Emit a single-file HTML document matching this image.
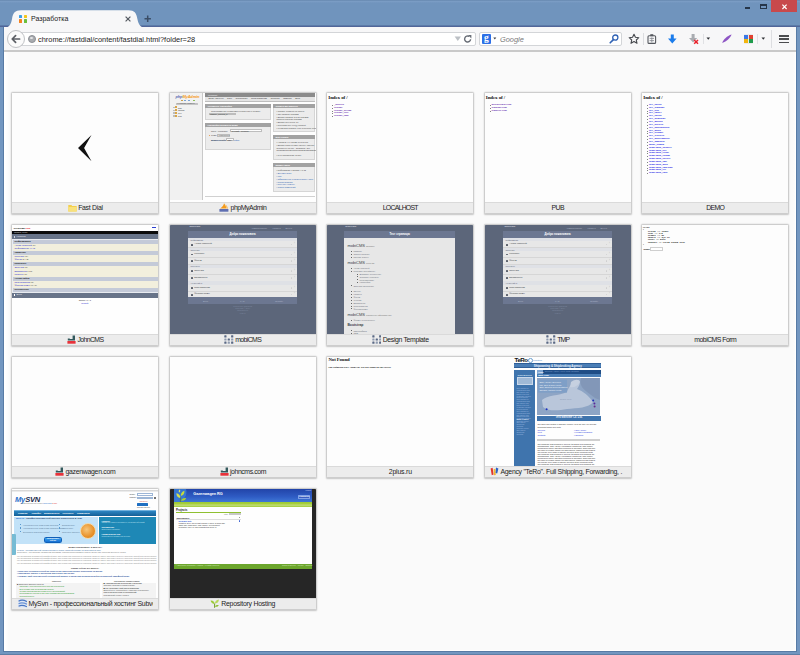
<!DOCTYPE html>
<html lang="ru">
<head>
<meta charset="utf-8">
<title>Разработка</title>
<style>
*{box-sizing:border-box;margin:0;padding:0}
html,body{width:800px;height:655px;overflow:hidden}
body{position:relative;background:#7195be;font-family:"Liberation Sans","DejaVu Sans",sans-serif;color:#222}
.abs{position:absolute}
/* window frame */
#frame{left:0;top:0;width:800px;height:655px;background:#7296c0}
#titlebar{left:0;top:0;width:800px;height:27px;background:linear-gradient(#6587ae 0,#7a9cc4 1.5px,#7094bd 3px,#7094bd 24.5px,#5a78a6 25.6px,#4e6397 26.4px,#5b73a3 27px)}
#tab{left:4px;top:10px;width:146px;height:18px}
#tabtxt{left:31px;top:14.5px;font-size:7px;color:#1a1a1a;letter-spacing:0;white-space:nowrap}
#navbar{left:4px;top:27px;width:792px;height:24px;background:#f7f7f8}
#navline{left:4px;top:50px;width:792px;height:2px;background:#c9c9c9}
#content{left:4px;top:52px;width:792px;height:599px;background:linear-gradient(to right,#fff 0,#fafafa 4px,#fafafa 788px,#fff 792px);border-left:1px solid #fff;border-right:1px solid #fff;border-bottom:1px solid #fff}
#edgeR{left:796px;top:27px;width:1px;height:625px;background:#587ba5}
#edgeL{left:3px;top:27px;width:1px;height:625px;background:#587ba5}
#edgeB{left:3px;top:651px;width:794px;height:1px;background:#587ba5}
#edgeBB{left:0;top:654px;width:800px;height:1px;background:#5f7fa6}
/* url bar */
.field{background:#fff;border:1px solid #d3d5d8;border-radius:2px;height:14.6px;top:31.6px}
#url{left:20px;width:456px}
#search{left:479px;width:143px}
.ftxt{font-size:7.4px;top:35px;white-space:nowrap;color:#1c1c1c}
/* tiles */
.tile{width:148.4px;height:122px;background:#fdfdfd;border:1px solid #cdcdcd;border-radius:1.5px;box-shadow:0 .6px 1.6px rgba(0,0,0,.22);overflow:hidden}
.tile .th{position:absolute;left:0;top:0;width:146.4px;height:109.1px;overflow:hidden}
.tile .cap{position:absolute;left:0;top:109.1px;width:146.4px;height:10.9px;background:#ececec;border-top:1px solid #dadada;overflow:hidden}
.cw{font-size:6.9px;line-height:10px;text-align:center;white-space:nowrap;color:#1d1d1d;letter-spacing:-.28px;margin:0 5.5px;overflow:hidden}
.ic{display:inline-block;vertical-align:-1.6px;margin-right:1.4px}
.b{position:absolute}
.t{position:absolute;white-space:nowrap}
</style>
</head>
<body>
<div id="frame" class="abs"></div>
<div id="titlebar" class="abs"></div>
<div id="navbar" class="abs"></div>
<div id="navline" class="abs"></div>
<div id="content" class="abs"></div>
<div id="edgeL" class="abs"></div>
<div id="edgeR" class="abs"></div>
<div id="edgeB" class="abs"></div>
<div id="edgeBB" class="abs"></div>

<!-- TAB -->
<svg id="tab" class="abs" viewBox="0 0 146 18" width="146" height="18">
  <path d="M0 18 C5 17.5 7 15 8 9 C9 3 11 0.3 17 0.3 L124.5 0.3 C130.5 0.3 132.3 3 133.4 9 C134.5 15 136.6 17.5 141.6 18 Z" fill="#f7f7f8"/>
</svg>
<div id="tabtxt" class="abs">Разработка</div>


<!-- tab favicon -->
<div class="abs" style="left:19px;top:15px;width:3.4px;height:3.2px;background:#3aa0ea;border-radius:.6px"></div>
<div class="abs" style="left:23.6px;top:15px;width:3.4px;height:3.2px;background:#f4c619;border-radius:.6px"></div>
<div class="abs" style="left:19px;top:19.4px;width:3.4px;height:3.2px;background:#f5821f;border-radius:.6px"></div>
<div class="abs" style="left:23.6px;top:19.4px;width:3.4px;height:3.2px;background:#6bbf3b;border-radius:.6px"></div>
<!-- tab close / new tab -->
<svg class="abs" style="left:124px;top:15px" width="8" height="8" viewBox="0 0 8 8"><path d="M1.6 1.6 L6.4 6.4 M6.4 1.6 L1.6 6.4" stroke="#555a61" stroke-width="1.2" fill="none"/></svg>
<svg class="abs" style="left:143px;top:14px" width="10" height="10" viewBox="0 0 10 10"><path d="M4.7 1.6 V8 M1.5 4.8 H7.9" stroke="#3a4d66" stroke-width="1.5" fill="none"/></svg>
<!-- window controls -->
<div class="abs" style="left:745px;top:7px;width:5px;height:2px;background:#26364a"></div>
<div class="abs" style="left:760px;top:4px;width:7px;height:5px;border:1px solid #26364a;border-top-width:2px"></div>
<div class="abs" style="left:771px;top:0;width:26px;height:12px;background:#c8494c"></div>
<svg class="abs" style="left:780px;top:3px" width="9" height="8" viewBox="0 0 9 8"><path d="M2.4 1.6 L6.6 6 M6.6 1.6 L2.4 6" stroke="#fff" stroke-width="1.15" fill="none"/></svg>

<!-- url field -->
<div id="url" class="abs field"></div>
<!-- back button -->
<div class="abs" style="left:7px;top:30px;width:18px;height:18px;border-radius:50%;background:#fbfbfb;border:1px solid #bfc1c4"></div>
<svg class="abs" style="left:10px;top:34px" width="12" height="10" viewBox="0 0 12 10"><path d="M9.6 5 H2.6 M5.6 1.6 L2.2 5 L5.6 8.4" stroke="#5c5f65" stroke-width="1.7" fill="none" stroke-linecap="round" stroke-linejoin="round"/></svg>
<!-- globe -->
<div class="abs" style="left:28px;top:35px;width:8px;height:8px;border-radius:50%;background:#a9acb0;border:1px solid #8d9095"></div>
<div class="abs" style="left:30px;top:36.5px;width:3px;height:2.6px;border-radius:50%;background:#e2e3e5"></div>
<div id="urltxt" class="abs ftxt" style="left:38px">chrome://fastdial/content/fastdial.html?folder=28</div>
<!-- dropdown + reload -->
<svg class="abs" style="left:454px;top:36px" width="8" height="6" viewBox="0 0 8 6"><path d="M0.6 0.6 H7 L3.8 5 Z" fill="#bcc0c5"/></svg>
<svg class="abs" style="left:463px;top:34px" width="10" height="10" viewBox="0 0 10 10"><path d="M7.6 5.2 A3 3 0 1 1 6.2 2.5" stroke="#6a6f78" stroke-width="1.4" fill="none"/><path d="M5 1 H8.4 V4.4 Z" fill="#6a6f78"/></svg>
<!-- search field -->
<div id="search" class="abs field"></div>
<div class="abs" style="left:481.5px;top:34px;width:9.5px;height:10px;background:#2c6fe6;border-radius:1px;color:#fff;font-family:'Liberation Serif',serif;font-weight:bold;font-size:9.5px;line-height:9px;text-align:center">g</div>
<svg class="abs" style="left:492.8px;top:37.3px" width="4" height="3" viewBox="0 0 4 3"><path d="M0.3 0.4 H3.3 L1.8 2.4 Z" fill="#3c4048"/></svg>
<div class="abs ftxt" style="left:500px;color:#7a7a7a;font-style:italic">Google</div>
<svg class="abs" style="left:608px;top:33px" width="12" height="12" viewBox="0 0 12 12"><circle cx="7.3" cy="4.6" r="2.6" stroke="#2f62b5" stroke-width="1.3" fill="none"/><path d="M5.4 6.6 L2.2 9.8" stroke="#2f62b5" stroke-width="1.6" stroke-linecap="round"/></svg>
<!-- star -->
<svg class="abs" style="left:628px;top:33px" width="12" height="12" viewBox="0 0 12 12"><path d="M6 1.2 L7.45 4.3 L10.8 4.7 L8.3 7 L9 10.3 L6 8.6 L3 10.3 L3.7 7 L1.2 4.7 L4.55 4.3 Z" stroke="#45484d" stroke-width="1.1" fill="none" stroke-linejoin="round"/></svg>
<div class="abs" style="left:642.5px;top:33px;width:1px;height:12px;background:#dcdde0"></div>
<!-- clipboard -->
<svg class="abs" style="left:646px;top:33px" width="12" height="12" viewBox="0 0 12 12"><rect x="2" y="2.8" width="7.6" height="7.6" rx="1" stroke="#55585e" stroke-width="1.1" fill="none"/><rect x="4.3" y="1.2" width="3" height="2" fill="#55585e"/><path d="M3.6 5.4 H8 M3.6 7.6 H8 M5.8 4.4 V9.4" stroke="#80838a" stroke-width=".8"/></svg>
<!-- blue down arrow -->
<svg class="abs" style="left:667px;top:33px" width="11" height="12" viewBox="0 0 11 12"><path d="M3.8 1.4 H6.8 V5.6 H9.6 L5.3 10.4 L1 5.6 H3.8 Z" fill="#1b7ceb"/></svg>
<!-- gray arrow with red x -->
<svg class="abs" style="left:688px;top:33px" width="12" height="12" viewBox="0 0 12 12"><path d="M3.6 1 H6.6 V5 H9.2 L5.1 9.6 L1 5 H3.6 Z" fill="#a9acb1"/><path d="M6.2 7 L10 10.8 M10 7 L6.2 10.8" stroke="#e8212b" stroke-width="1.5"/></svg>
<div class="abs" style="left:702.5px;top:34px;width:1px;height:10px;background:#e0e1e4"></div>
<svg class="abs" style="left:706.3px;top:37.3px" width="5" height="4" viewBox="0 0 5 4"><path d="M0.5 0.5 H4.1 L2.3 2.7 Z" fill="#2d2f33"/></svg>
<!-- purple feather -->
<svg class="abs" style="left:721px;top:33px" width="12" height="12" viewBox="0 0 12 12"><path d="M1.2 10 C2.5 6.5 6 3 10.6 1.6 C9.4 5.2 5.6 8.4 1.2 10 Z" fill="#8d55c4"/></svg>
<!-- colorful icon -->
<div class="abs" style="left:743.5px;top:34px;width:9.5px;height:9.5px;background:#e9e9e9;border-radius:1px"></div>
<div class="abs" style="left:744px;top:34.5px;width:4px;height:4px;background:#3b78e7"></div>
<div class="abs" style="left:748.5px;top:34.5px;width:4px;height:4px;background:#e0412f"></div>
<div class="abs" style="left:744px;top:39px;width:4px;height:4px;background:#f2b50f"></div>
<div class="abs" style="left:748.5px;top:39px;width:4px;height:4px;background:#1f9c4d"></div>
<div class="abs" style="left:756.5px;top:34px;width:1px;height:10px;background:#e0e1e4"></div>
<svg class="abs" style="left:760.8px;top:37.3px" width="5" height="4" viewBox="0 0 5 4"><path d="M0.5 0.5 H4.1 L2.3 2.7 Z" fill="#2d2f33"/></svg>
<div class="abs" style="left:771px;top:30px;width:1px;height:18px;background:#dddee1"></div>
<!-- hamburger -->
<div class="abs" style="left:779px;top:35px;width:10px;height:1.5px;background:#4b4c4f"></div>
<div class="abs" style="left:779px;top:38.3px;width:10px;height:1.5px;background:#4b4c4f"></div>
<div class="abs" style="left:779px;top:41.6px;width:10px;height:1.5px;background:#4b4c4f"></div>

<!-- TILES -->
<div id="tiles">
<div class="tile abs" style="left:11.10px;top:92.00px"><div class="th" style="background:#fdfdfd"><svg class="b" style="left:65.20px;top:40.70px" width="16" height="29" viewBox="0 0 16 29"><path d="M1 14 L14.5 1 L7.1 14 L14.5 27.3 Z" fill="#111"/></svg></div><div class="cap"><div class="cw" style=""><svg class="ic" width="9" height="8" viewBox="0 0 9 8"><path d="M0.3 1 H3.4 L4.2 2 H8.7 V7.6 H0.3 Z" fill="#f3cf4c"/><path d="M0.3 3 H8.7 V7.6 H0.3 Z" fill="#f8e17c"/></svg>Fast Dial</div></div></div>
<div class="tile abs" style="left:168.60px;top:92.00px"><div class="th" style="background:#fefefe"><div class="b" style="left:0.00px;top:0.00px;width:33.50px;height:107.00px;background:#f1f1f1;border-right:1px solid #c9c9c9"></div><div class="t" style="left:5.90px;top:1.60px;font-size:4px;line-height:4px;color:#222;font-weight:bold;font-style:italic;letter-spacing:-.15px"><span style="color:#5f6fb2">php</span><span style="color:#f59b1c">MyAdmin</span></div><div class="b" style="left:11.40px;top:6.60px;width:2.00px;height:1.80px;background:#c9a24a;"></div><div class="b" style="left:14.90px;top:6.60px;width:2.00px;height:1.80px;background:#7aa3d6;"></div><div class="b" style="left:18.40px;top:6.60px;width:2.00px;height:1.80px;background:#7aa3d6;"></div><div class="b" style="left:23.40px;top:6.60px;width:2.00px;height:1.80px;background:#8ec05a;"></div><div class="b" style="left:6.40px;top:9.60px;width:22.00px;height:2.60px;background:#fdfdfd;border:.5px solid #c6c6c6"></div><div class="t" style="left:7.40px;top:10.00px;font-size:1.9px;line-height:1.9px;color:#555;">(Недавние таблицы) ...</div><div class="b" style="left:3.40px;top:13.60px;width:1.60px;height:1.60px;background:#bdbdbd;"></div><div class="b" style="left:5.70px;top:13.40px;width:2.00px;height:2.00px;background:#d9a548;"></div><div class="t" style="left:8.40px;top:13.50px;font-size:2.2px;line-height:2.2px;color:#333;">bas</div><div class="b" style="left:3.40px;top:16.50px;width:1.60px;height:1.60px;background:#bdbdbd;"></div><div class="b" style="left:5.70px;top:16.30px;width:2.00px;height:2.00px;background:#d9a548;"></div><div class="t" style="left:8.40px;top:16.40px;font-size:2.2px;line-height:2.2px;color:#333;">dbcms</div><div class="b" style="left:3.40px;top:19.40px;width:1.60px;height:1.60px;background:#bdbdbd;"></div><div class="b" style="left:5.70px;top:19.20px;width:2.00px;height:2.00px;background:#d9a548;"></div><div class="t" style="left:8.40px;top:19.30px;font-size:2.2px;line-height:2.2px;color:#333;">dev</div><div class="b" style="left:3.40px;top:22.30px;width:1.60px;height:1.60px;background:#bdbdbd;"></div><div class="b" style="left:5.70px;top:22.10px;width:2.00px;height:2.00px;background:#d9a548;"></div><div class="t" style="left:8.40px;top:22.20px;font-size:2.2px;line-height:2.2px;color:#333;">pub</div><div class="b" style="left:35.90px;top:0.40px;width:109.70px;height:3.70px;background:#8b8b8b;"></div><div class="t" style="left:38.40px;top:1.30px;font-size:2.3px;line-height:2.3px;color:#f2f2f2;">localhost</div><div class="b" style="left:35.90px;top:4.10px;width:109.70px;height:4.60px;background:#e4e4e4;border-bottom:.5px solid #bdbdbd"></div><div class="t" style="left:38.90px;top:5.40px;font-size:2.45px;line-height:2.45px;color:#3a3a3a;white-space:pre;word-spacing:.2px">Базы данных    SQL    Состояние    Пользователи    Экспорт    Импорт    Ещё</div><div class="b" style="left:35.90px;top:11.00px;width:65.50px;height:3.80px;background:#a2a2a2;"></div><div class="t" style="left:37.90px;top:11.80px;font-size:2.3px;line-height:2.3px;color:#fff;font-weight:bold">Основные настройки</div><div class="b" style="left:35.90px;top:14.80px;width:65.50px;height:12.30px;background:#ececec;border:.5px solid #d5d5d5;border-top:0"></div><div class="t" style="left:41.40px;top:17.40px;font-size:2.2px;line-height:2.2px;color:#444;">Сопоставление кодировки соединения с MySQL:</div><div class="b" style="left:39.40px;top:19.60px;width:27.00px;height:2.80px;background:#fdfdfd;border:.5px solid #bdbdbd"></div><div class="t" style="left:40.40px;top:20.00px;font-size:2px;line-height:2px;color:#333;">utf8mb4_general_ci</div><div class="b" style="left:35.90px;top:29.80px;width:65.50px;height:3.80px;background:#a2a2a2;"></div><div class="t" style="left:37.90px;top:30.60px;font-size:2.3px;line-height:2.3px;color:#fff;font-weight:bold">Настройки внешнего вида</div><div class="b" style="left:35.90px;top:33.60px;width:65.50px;height:23.00px;background:#ececec;border:.5px solid #d5d5d5;border-top:0"></div><div class="t" style="left:41.40px;top:45.60px;font-size:2.2px;line-height:2.2px;color:#2a5db0;">Дополнительные настройки</div><div class="t" style="left:41.40px;top:37.00px;font-size:2.2px;line-height:2.2px;color:#444;">Язык - Language</div><div class="b" style="left:60.40px;top:36.20px;width:32.00px;height:3.00px;background:#fdfdfd;border:.5px solid #bdbdbd"></div><div class="t" style="left:61.90px;top:36.80px;font-size:2.1px;line-height:2.1px;color:#333;">Русский - Russian</div><div class="b" style="left:39.00px;top:41.60px;width:1.80px;height:1.80px;background:#e88a2a;border-radius:50%"></div><div class="t" style="left:41.40px;top:41.40px;font-size:2.2px;line-height:2.2px;color:#444;">Тема:</div><div class="b" style="left:47.90px;top:40.80px;width:13.00px;height:3.00px;background:#fdfdfd;border:.5px solid #bdbdbd"></div><div class="t" style="left:48.90px;top:41.40px;font-size:2.1px;line-height:2.1px;color:#333;">pmahomme</div><div class="t" style="left:41.40px;top:45.80px;font-size:2.2px;line-height:2.2px;color:#444;">Размер шрифта:</div><div class="b" style="left:56.90px;top:45.20px;width:8.00px;height:3.00px;background:#fdfdfd;border:.5px solid #bdbdbd"></div><div class="t" style="left:57.90px;top:45.80px;font-size:2.1px;line-height:2.1px;color:#333;">82%</div><div class="b" style="left:103.80px;top:11.00px;width:41.80px;height:3.80px;background:#a2a2a2;"></div><div class="t" style="left:105.80px;top:11.80px;font-size:2.3px;line-height:2.3px;color:#fff;font-weight:bold">Сервер баз данных</div><div class="b" style="left:103.80px;top:14.80px;width:41.80px;height:24.40px;background:#ececec;border:.5px solid #d5d5d5;border-top:0"></div><div class="t" style="left:106.80px;top:17.40px;font-size:2.05px;line-height:2.05px;color:#444;">• Сервер: localhost via TCP/IP</div><div class="t" style="left:106.80px;top:20.10px;font-size:2.05px;line-height:2.05px;color:#444;">• Тип сервера: MariaDB</div><div class="t" style="left:106.80px;top:22.80px;font-size:2.05px;line-height:2.05px;color:#444;">• Версия сервера: 5.5.37-MariaDB</div><div class="t" style="left:106.80px;top:25.20px;font-size:2.05px;line-height:2.05px;color:#444;">   распространение MariaDB</div><div class="t" style="left:106.80px;top:28.00px;font-size:2.05px;line-height:2.05px;color:#444;">• Версия протокола: 10</div><div class="t" style="left:106.80px;top:30.80px;font-size:2.05px;line-height:2.05px;color:#444;">• Пользователь: root@localhost</div><div class="t" style="left:106.80px;top:33.60px;font-size:2.05px;line-height:2.05px;color:#444;">• Кодировка сервера: UTF-8 Unicode (utf8)</div><div class="b" style="left:103.80px;top:42.00px;width:41.80px;height:3.80px;background:#a2a2a2;"></div><div class="t" style="left:105.80px;top:42.80px;font-size:2.3px;line-height:2.3px;color:#fff;font-weight:bold">Веб-сервер</div><div class="b" style="left:103.80px;top:45.80px;width:41.80px;height:21.00px;background:#ececec;border:.5px solid #d5d5d5;border-top:0"></div><div class="t" style="left:106.80px;top:48.40px;font-size:2.05px;line-height:2.05px;color:#444;">• Apache/2.4.9 (Win32) PHP/5.5.11</div><div class="t" style="left:106.80px;top:51.20px;font-size:2.05px;line-height:2.05px;color:#444;">• Версия клиента базы данных: libmysql</div><div class="t" style="left:106.80px;top:53.80px;font-size:2.05px;line-height:2.05px;color:#444;">   mysqlnd 5.0.11-dev - 20120503 - $Id:</div><div class="t" style="left:106.80px;top:56.40px;font-size:2.05px;line-height:2.05px;color:#444;">   bf9ad53b11c9a57efdb1057292d73b928b8c5c77</div><div class="t" style="left:106.80px;top:61.40px;font-size:2.05px;line-height:2.05px;color:#444;">• PHP расширение: mysqli</div><div class="b" style="left:103.80px;top:69.80px;width:41.80px;height:3.80px;background:#a2a2a2;"></div><div class="t" style="left:105.80px;top:70.60px;font-size:2.3px;line-height:2.3px;color:#fff;font-weight:bold">phpMyAdmin</div><div class="b" style="left:103.80px;top:73.60px;width:41.80px;height:25.60px;background:#ececec;border:.5px solid #d5d5d5;border-top:0"></div><div class="t" style="left:106.80px;top:76.40px;font-size:2.05px;line-height:2.05px;color:#444;">• Информация о версии: 4.1.12</div><div class="t" style="left:106.80px;top:79.20px;font-size:2.05px;line-height:2.05px;color:#2a5db0;">• Документация</div><div class="t" style="left:106.80px;top:82.00px;font-size:2.05px;line-height:2.05px;color:#2a5db0;">• Wiki</div><div class="t" style="left:106.80px;top:84.80px;font-size:2.05px;line-height:2.05px;color:#2a5db0;">• Официальная страница phpMyAdmin</div><div class="t" style="left:106.80px;top:87.60px;font-size:2.05px;line-height:2.05px;color:#2a5db0;">• Пожертвование</div><div class="t" style="left:106.80px;top:90.40px;font-size:2.05px;line-height:2.05px;color:#2a5db0;">• Получить помощь</div><div class="t" style="left:106.80px;top:93.20px;font-size:2.05px;line-height:2.05px;color:#2a5db0;">• Список изменений</div><div class="b" style="left:35.90px;top:103.20px;width:109.70px;height:0.60px;background:#d0d0d0;"></div></div><div class="cap"><div class="cw" style="letter-spacing:-0.42px;"><svg class="ic" width="10" height="9" viewBox="0 0 10 9"><path d="M1 5.4 C3 4.6 4.6 2.6 5 0.3 C6.4 2 7.4 4 7.6 5.6 Z" fill="#f59b1c"/><path d="M6.6 1.6 C8 3 8.8 4.4 9 5.8 L7.8 5.6 Z" fill="#f7b853"/><rect x="0.4" y="6" width="9" height="2.7" fill="#5f6fb2"/></svg>phpMyAdmin</div></div></div>
<div class="tile abs" style="left:326.10px;top:92.00px"><div class="th" style="background:#fdfdfd"><div class="t" style="left:1.20px;top:2.20px;font-size:5px;line-height:5px;color:#111;font-family:'Liberation Serif',serif;font-weight:bold;letter-spacing:-.1px">Index of /</div><div class="b" style="left:5.00px;top:11.90px;width:0.90px;height:0.90px;background:#333;border-radius:50%"></div><div class="t" style="left:6.80px;top:10.90px;font-size:2.75px;line-height:2.75px;color:#6a2fb0;font-family:'Liberation Serif',serif;font-weight:bold">_dbprop</div><div class="b" style="left:5.00px;top:14.75px;width:0.90px;height:0.90px;background:#333;border-radius:50%"></div><div class="t" style="left:6.80px;top:13.75px;font-size:2.75px;line-height:2.75px;color:#6a2fb0;font-family:'Liberation Serif',serif;font-weight:bold">selfcms</div><div class="b" style="left:5.00px;top:17.60px;width:0.90px;height:0.90px;background:#333;border-radius:50%"></div><div class="t" style="left:6.80px;top:16.60px;font-size:2.75px;line-height:2.75px;color:#6a2fb0;font-family:'Liberation Serif',serif;font-weight:bold">selfcms_design</div><div class="b" style="left:5.00px;top:20.45px;width:0.90px;height:0.90px;background:#333;border-radius:50%"></div><div class="t" style="left:6.80px;top:19.45px;font-size:2.75px;line-height:2.75px;color:#6a2fb0;font-family:'Liberation Serif',serif;font-weight:bold">selfcms_foto</div><div class="b" style="left:5.00px;top:23.30px;width:0.90px;height:0.90px;background:#333;border-radius:50%"></div><div class="t" style="left:6.80px;top:22.30px;font-size:2.75px;line-height:2.75px;color:#6a2fb0;font-family:'Liberation Serif',serif;font-weight:bold">selfcms_tmp</div></div><div class="cap"><div class="cw" style="letter-spacing:-0.75px;">LOCALHOST</div></div></div>
<div class="tile abs" style="left:483.60px;top:92.00px"><div class="th" style="background:#fdfdfd"><div class="t" style="left:1.20px;top:2.20px;font-size:5px;line-height:5px;color:#111;font-family:'Liberation Serif',serif;font-weight:bold;letter-spacing:-.1px">Index of /</div><div class="b" style="left:5.00px;top:11.90px;width:0.90px;height:0.90px;background:#333;border-radius:50%"></div><div class="t" style="left:6.80px;top:10.90px;font-size:2.75px;line-height:2.75px;color:#6a2fb0;font-family:'Liberation Serif',serif;font-weight:bold">gazenwagen.com</div><div class="b" style="left:5.00px;top:14.75px;width:0.90px;height:0.90px;background:#333;border-radius:50%"></div><div class="t" style="left:6.80px;top:13.75px;font-size:2.75px;line-height:2.75px;color:#6a2fb0;font-family:'Liberation Serif',serif;font-weight:bold">johncms.com</div><div class="b" style="left:5.00px;top:17.60px;width:0.90px;height:0.90px;background:#333;border-radius:50%"></div><div class="t" style="left:6.80px;top:16.60px;font-size:2.75px;line-height:2.75px;color:#6a2fb0;font-family:'Liberation Serif',serif;font-weight:bold">tempsite.com</div></div><div class="cap"><div class="cw" style="letter-spacing:-0.55px;">PUB</div></div></div>
<div class="tile abs" style="left:641.10px;top:92.00px"><div class="th" style="background:#fdfdfd"><div class="t" style="left:1.20px;top:2.20px;font-size:5px;line-height:5px;color:#111;font-family:'Liberation Serif',serif;font-weight:bold;letter-spacing:-.1px">Index of /</div><div class="b" style="left:5.00px;top:11.90px;width:0.90px;height:0.90px;background:#333;border-radius:50%"></div><div class="t" style="left:6.80px;top:10.90px;font-size:2.75px;line-height:2.75px;color:#2323e6;font-family:'Liberation Serif',serif;font-weight:bold">dev_install</div><div class="b" style="left:5.00px;top:14.75px;width:0.90px;height:0.90px;background:#333;border-radius:50%"></div><div class="t" style="left:6.80px;top:13.75px;font-size:2.75px;line-height:2.75px;color:#2323e6;font-family:'Liberation Serif',serif;font-weight:bold">dev_johncms</div><div class="b" style="left:5.00px;top:17.60px;width:0.90px;height:0.90px;background:#333;border-radius:50%"></div><div class="t" style="left:6.80px;top:16.60px;font-size:2.75px;line-height:2.75px;color:#2323e6;font-family:'Liberation Serif',serif;font-weight:bold">dev_foto</div><div class="b" style="left:5.00px;top:20.45px;width:0.90px;height:0.90px;background:#333;border-radius:50%"></div><div class="t" style="left:6.80px;top:19.45px;font-size:2.75px;line-height:2.75px;color:#2323e6;font-family:'Liberation Serif',serif;font-weight:bold">dev_shop4</div><div class="b" style="left:5.00px;top:23.30px;width:0.90px;height:0.90px;background:#333;border-radius:50%"></div><div class="t" style="left:6.80px;top:22.30px;font-size:2.75px;line-height:2.75px;color:#2323e6;font-family:'Liberation Serif',serif;font-weight:bold">dev_install</div><div class="b" style="left:5.00px;top:26.15px;width:0.90px;height:0.90px;background:#333;border-radius:50%"></div><div class="t" style="left:6.80px;top:25.15px;font-size:2.75px;line-height:2.75px;color:#2323e6;font-family:'Liberation Serif',serif;font-weight:bold">dev_dcmskins</div><div class="b" style="left:5.00px;top:29.00px;width:0.90px;height:0.90px;background:#333;border-radius:50%"></div><div class="t" style="left:6.80px;top:28.00px;font-size:2.75px;line-height:2.75px;color:#2323e6;font-family:'Liberation Serif',serif;font-weight:bold">dev_upload</div><div class="b" style="left:5.00px;top:31.85px;width:0.90px;height:0.90px;background:#333;border-radius:50%"></div><div class="t" style="left:6.80px;top:30.85px;font-size:2.75px;line-height:2.75px;color:#2323e6;font-family:'Liberation Serif',serif;font-weight:bold">dev_proweb</div><div class="b" style="left:5.00px;top:34.70px;width:0.90px;height:0.90px;background:#333;border-radius:50%"></div><div class="t" style="left:6.80px;top:33.70px;font-size:2.75px;line-height:2.75px;color:#2323e6;font-family:'Liberation Serif',serif;font-weight:bold">dev_photoupload</div><div class="b" style="left:5.00px;top:37.55px;width:0.90px;height:0.90px;background:#333;border-radius:50%"></div><div class="t" style="left:6.80px;top:36.55px;font-size:2.75px;line-height:2.75px;color:#2323e6;font-family:'Liberation Serif',serif;font-weight:bold">dev_mod4</div><div class="b" style="left:5.00px;top:40.40px;width:0.90px;height:0.90px;background:#333;border-radius:50%"></div><div class="t" style="left:6.80px;top:39.40px;font-size:2.75px;line-height:2.75px;color:#2323e6;font-family:'Liberation Serif',serif;font-weight:bold">dev_forum4</div><div class="b" style="left:5.00px;top:43.25px;width:0.90px;height:0.90px;background:#333;border-radius:50%"></div><div class="t" style="left:6.80px;top:42.25px;font-size:2.75px;line-height:2.75px;color:#2323e6;font-family:'Liberation Serif',serif;font-weight:bold">dev_wikiweb</div><div class="b" style="left:5.00px;top:46.10px;width:0.90px;height:0.90px;background:#333;border-radius:50%"></div><div class="t" style="left:6.80px;top:45.10px;font-size:2.75px;line-height:2.75px;color:#2323e6;font-family:'Liberation Serif',serif;font-weight:bold">dev_mailtemplate</div><div class="b" style="left:5.00px;top:48.95px;width:0.90px;height:0.90px;background:#333;border-radius:50%"></div><div class="t" style="left:6.80px;top:47.95px;font-size:2.75px;line-height:2.75px;color:#2323e6;font-family:'Liberation Serif',serif;font-weight:bold">dev_jumpbar</div><div class="b" style="left:5.00px;top:51.80px;width:0.90px;height:0.90px;background:#333;border-radius:50%"></div><div class="t" style="left:6.80px;top:50.80px;font-size:2.75px;line-height:2.75px;color:#2323e6;font-family:'Liberation Serif',serif;font-weight:bold">mods_admin</div><div class="b" style="left:5.00px;top:54.65px;width:0.90px;height:0.90px;background:#333;border-radius:50%"></div><div class="t" style="left:6.80px;top:53.65px;font-size:2.75px;line-height:2.75px;color:#2323e6;font-family:'Liberation Serif',serif;font-weight:bold">dcms-mod_adapter</div><div class="b" style="left:5.00px;top:57.50px;width:0.90px;height:0.90px;background:#333;border-radius:50%"></div><div class="t" style="left:6.80px;top:56.50px;font-size:2.75px;line-height:2.75px;color:#2323e6;font-family:'Liberation Serif',serif;font-weight:bold">dcms-mod_bot</div><div class="b" style="left:5.00px;top:60.35px;width:0.90px;height:0.90px;background:#333;border-radius:50%"></div><div class="t" style="left:6.80px;top:59.35px;font-size:2.75px;line-height:2.75px;color:#2323e6;font-family:'Liberation Serif',serif;font-weight:bold">dcms-mod_crons</div><div class="b" style="left:5.00px;top:63.20px;width:0.90px;height:0.90px;background:#333;border-radius:50%"></div><div class="t" style="left:6.80px;top:62.20px;font-size:2.75px;line-height:2.75px;color:#2323e6;font-family:'Liberation Serif',serif;font-weight:bold">dcms-mod_forum</div><div class="b" style="left:5.00px;top:66.05px;width:0.90px;height:0.90px;background:#333;border-radius:50%"></div><div class="t" style="left:6.80px;top:65.05px;font-size:2.75px;line-height:2.75px;color:#2323e6;font-family:'Liberation Serif',serif;font-weight:bold">dcms-mod_library</div><div class="b" style="left:5.00px;top:68.90px;width:0.90px;height:0.90px;background:#333;border-radius:50%"></div><div class="t" style="left:6.80px;top:67.90px;font-size:2.75px;line-height:2.75px;color:#2323e6;font-family:'Liberation Serif',serif;font-weight:bold">dcms-mod_sms</div><div class="b" style="left:5.00px;top:71.75px;width:0.90px;height:0.90px;background:#333;border-radius:50%"></div><div class="t" style="left:6.80px;top:70.75px;font-size:2.75px;line-height:2.75px;color:#2323e6;font-family:'Liberation Serif',serif;font-weight:bold">dcms-mod_map</div><div class="b" style="left:5.00px;top:74.60px;width:0.90px;height:0.90px;background:#333;border-radius:50%"></div><div class="t" style="left:6.80px;top:73.60px;font-size:2.75px;line-height:2.75px;color:#2323e6;font-family:'Liberation Serif',serif;font-weight:bold">dcms-mod_tmp.php</div><div class="b" style="left:5.00px;top:77.45px;width:0.90px;height:0.90px;background:#333;border-radius:50%"></div><div class="t" style="left:6.80px;top:76.45px;font-size:2.75px;line-height:2.75px;color:#2323e6;font-family:'Liberation Serif',serif;font-weight:bold">dcms-mod_csv</div><div class="b" style="left:5.00px;top:80.30px;width:0.90px;height:0.90px;background:#333;border-radius:50%"></div><div class="t" style="left:6.80px;top:79.30px;font-size:2.75px;line-height:2.75px;color:#2323e6;font-family:'Liberation Serif',serif;font-weight:bold">dcms-mod_chat</div></div><div class="cap"><div class="cw" style="letter-spacing:-0.68px;">DEMO</div></div></div>
<div class="tile abs" style="left:11.10px;top:224.10px"><div class="th" style="background:#fefefe"><div class="t" style="left:1.30px;top:1.50px;font-size:2.3px;line-height:2.3px;color:#222;font-weight:bold"><span style="color:#111">JOHNCMS</span><span style="color:#e0262c">.com</span></div><div class="b" style="left:139.70px;top:1.50px;width:1.80px;height:1.60px;background:#2c3fd0;"></div><div class="b" style="left:142.10px;top:1.50px;width:2.20px;height:1.60px;background:#2c3fd0;"></div><div class="b" style="left:0.00px;top:5.50px;width:146.40px;height:3.70px;background:#0b0b0b;"></div><div class="t" style="left:1.90px;top:6.20px;font-size:2.2px;line-height:2.2px;color:#ddd;">Привет, Гость</div><div class="b" style="left:0.00px;top:9.20px;width:146.40px;height:5.00px;background:#687489;"></div><div class="b" style="left:1.50px;top:10.70px;width:1.80px;height:1.80px;background:#cfd5e0;"></div><div class="t" style="left:4.30px;top:10.50px;font-size:2.4px;line-height:2.4px;color:#e8ebf1;">Новости</div><div class="b" style="left:0.00px;top:14.20px;width:146.40px;height:58.40px;background:#e9ecf1;"></div><div class="b" style="left:0.60px;top:15.10px;width:145.20px;height:3.70px;background:#c4cad8;"></div><div class="t" style="left:2.30px;top:15.70px;font-size:2.5px;line-height:2.5px;color:#1c1c1c;font-weight:bold">Информация</div><div class="b" style="left:0.60px;top:18.80px;width:145.20px;height:7.44px;background:#f2efdd;"></div><div class="t" style="left:2.30px;top:19.60px;font-size:2.4px;line-height:2.4px;color:#222;"><span style="color:#2a2ad0">Архив новостей</span> <span style="color:#333">(1)</span></div><div class="t" style="left:2.30px;top:23.30px;font-size:2.4px;line-height:2.4px;color:#222;"><span style="color:#2a2ad0">Информация, FAQ</span> <span style="color:#333"></span></div><div class="b" style="left:0.60px;top:26.20px;width:145.20px;height:3.70px;background:#c4cad8;"></div><div class="t" style="left:2.30px;top:26.80px;font-size:2.5px;line-height:2.5px;color:#1c1c1c;font-weight:bold">Общение</div><div class="b" style="left:0.60px;top:29.90px;width:145.20px;height:7.44px;background:#f2efdd;"></div><div class="t" style="left:2.30px;top:30.70px;font-size:2.4px;line-height:2.4px;color:#222;"><span style="color:#2a2ad0">Гостевая</span> <span style="color:#333">(0)</span></div><div class="t" style="left:2.30px;top:34.40px;font-size:2.4px;line-height:2.4px;color:#222;"><span style="color:#2a2ad0">Форум</span> <span style="color:#333">(1 / 3)</span></div><div class="b" style="left:0.60px;top:37.30px;width:145.20px;height:3.70px;background:#c4cad8;"></div><div class="t" style="left:2.30px;top:37.90px;font-size:2.5px;line-height:2.5px;color:#1c1c1c;font-weight:bold">Полезное</div><div class="b" style="left:0.60px;top:41.00px;width:145.20px;height:11.16px;background:#f2efdd;"></div><div class="t" style="left:2.30px;top:41.80px;font-size:2.4px;line-height:2.4px;color:#222;"><span style="color:#2a2ad0">Загрузки</span> <span style="color:#333">(0)</span></div><div class="t" style="left:2.30px;top:45.50px;font-size:2.4px;line-height:2.4px;color:#222;"><span style="color:#2a2ad0">Библиотека</span> <span style="color:#333">(48)</span></div><div class="t" style="left:2.30px;top:49.20px;font-size:2.4px;line-height:2.4px;color:#222;"><span style="color:#2a2ad0">Галерея</span> <span style="color:#333">(0)</span></div><div class="b" style="left:0.60px;top:52.10px;width:145.20px;height:3.70px;background:#c4cad8;"></div><div class="t" style="left:2.30px;top:52.70px;font-size:2.5px;line-height:2.5px;color:#1c1c1c;font-weight:bold">Актив сайта</div><div class="b" style="left:0.60px;top:55.80px;width:145.20px;height:7.44px;background:#f2efdd;"></div><div class="t" style="left:2.30px;top:56.60px;font-size:2.4px;line-height:2.4px;color:#222;"><span style="color:#2a2ad0">Пользователи</span> <span style="color:#333">(1)</span></div><div class="t" style="left:2.30px;top:60.30px;font-size:2.4px;line-height:2.4px;color:#222;"><span style="color:#2a2ad0">Фотоальбомы</span> <span style="color:#333">(0 / 0)</span></div><div class="b" style="left:0.60px;top:63.20px;width:145.20px;height:3.70px;background:#c4cad8;"></div><div class="t" style="left:2.30px;top:63.80px;font-size:2.5px;line-height:2.5px;color:#1c1c1c;font-weight:bold">Интересное</div><div class="b" style="left:0.00px;top:67.80px;width:146.40px;height:4.80px;background:#687489;"></div><div class="b" style="left:1.50px;top:69.30px;width:1.60px;height:1.60px;background:#fff;"></div><div class="t" style="left:4.30px;top:69.10px;font-size:2.4px;line-height:2.4px;color:#e8ebf1;">Вход</div><div class="t" style="left:0.00px;top:74.10px;font-size:2.3px;line-height:2.3px;color:#222;"><div style="width:145.5px;text-align:center;color:#222">Online: 0 / 1</div></div><div class="t" style="left:0.00px;top:77.30px;font-size:2.3px;line-height:2.3px;color:#222;"><div style="width:145.5px;text-align:center;color:#2a2ad0">Гостей</div></div></div><div class="cap"><div class="cw" style="letter-spacing:-0.61px;"><svg class="ic" width="9" height="9" viewBox="0 0 9 9"><path d="M5.6 0.4 H8 V5.4 H0.8 V3.4 H2.8 V4 H5.6 Z" fill="#33595d"/><rect x="0.4" y="6" width="8.2" height="2.7" fill="#e8323a"/></svg>JohnCMS</div></div></div>
<div class="tile abs" style="left:168.60px;top:224.10px"><div class="th" style="background:#5c667a"><div class="t" style="left:19.80px;top:1.30px;font-size:2.4px;line-height:2.4px;color:#c9cedb;font-weight:bold">mobiCMS</div><div class="t" style="left:81.30px;top:1.50px;font-size:2.2px;line-height:2.2px;color:#aeb6c7;">Администрация</div><div class="t" style="left:102.80px;top:1.50px;font-size:2.2px;line-height:2.2px;color:#aeb6c7;">Кабинет</div><div class="t" style="left:115.80px;top:1.50px;font-size:2.2px;line-height:2.2px;color:#aeb6c7;">Выход</div><div class="b" style="left:18.30px;top:5.50px;width:109.50px;height:0.50px;background:#7a859e;"></div><div class="b" style="left:18.30px;top:6.30px;width:109.50px;height:6.70px;background:#6c7791;"></div><div class="t" style="left:18.30px;top:8.20px;font-size:2.8px;line-height:2.8px;color:#fff;font-weight:bold"><div style="width:109.5px;text-align:center">Добро пожаловать</div></div><div class="b" style="left:18.30px;top:13.00px;width:109.50px;height:59.40px;background:#e7e7e7;"></div><div class="b" style="left:18.30px;top:13.00px;width:109.50px;height:3.30px;background:#dfe1e6;"></div><div class="t" style="left:20.90px;top:13.60px;font-size:2.1px;line-height:2.1px;color:#5a6275;">Информация</div><div class="b" style="left:18.30px;top:22.40px;width:109.50px;height:0.50px;background:#d6d6d6;"></div><div class="b" style="left:21.20px;top:18.70px;width:1.80px;height:1.80px;background:#5b606b;border-radius:.5px"></div><div class="t" style="left:24.70px;top:18.40px;font-size:2.4px;line-height:2.4px;color:#3b3f47;">Архив новостей</div><div class="b" style="left:121.30px;top:18.70px;width:1.60px;height:1.60px;background:#cfcfcf;border-radius:50%"></div><div class="t" style="left:124.30px;top:18.30px;font-size:2.6px;line-height:2.6px;color:#b0b0b0;">›</div><div class="b" style="left:18.30px;top:22.90px;width:109.50px;height:3.30px;background:#dfe1e6;"></div><div class="t" style="left:20.90px;top:23.50px;font-size:2.1px;line-height:2.1px;color:#5a6275;">Общение</div><div class="b" style="left:18.30px;top:32.40px;width:109.50px;height:0.50px;background:#d6d6d6;"></div><div class="b" style="left:21.20px;top:28.60px;width:1.80px;height:1.80px;background:#5b606b;border-radius:.5px"></div><div class="t" style="left:24.70px;top:28.30px;font-size:2.4px;line-height:2.4px;color:#3b3f47;">Гостевая</div><div class="b" style="left:121.30px;top:28.60px;width:1.60px;height:1.60px;background:#cfcfcf;border-radius:50%"></div><div class="t" style="left:124.30px;top:28.20px;font-size:2.6px;line-height:2.6px;color:#b0b0b0;">›</div><div class="b" style="left:18.30px;top:39.20px;width:109.50px;height:0.50px;background:#d6d6d6;"></div><div class="b" style="left:21.20px;top:35.30px;width:1.80px;height:1.80px;background:#5b606b;border-radius:.5px"></div><div class="t" style="left:24.70px;top:35.00px;font-size:2.4px;line-height:2.4px;color:#3b3f47;">Форум</div><div class="b" style="left:121.30px;top:35.30px;width:1.60px;height:1.60px;background:#cfcfcf;border-radius:50%"></div><div class="t" style="left:124.30px;top:34.90px;font-size:2.6px;line-height:2.6px;color:#b0b0b0;">›</div><div class="b" style="left:18.30px;top:39.70px;width:109.50px;height:3.20px;background:#dfe1e6;"></div><div class="t" style="left:20.90px;top:40.30px;font-size:2.1px;line-height:2.1px;color:#5a6275;">Полезное</div><div class="b" style="left:18.30px;top:49.10px;width:109.50px;height:0.50px;background:#d6d6d6;"></div><div class="b" style="left:21.20px;top:45.30px;width:1.80px;height:1.80px;background:#5b606b;border-radius:.5px"></div><div class="t" style="left:24.70px;top:45.00px;font-size:2.4px;line-height:2.4px;color:#3b3f47;">Загрузки</div><div class="b" style="left:121.30px;top:45.30px;width:1.60px;height:1.60px;background:#cfcfcf;border-radius:50%"></div><div class="t" style="left:124.30px;top:44.90px;font-size:2.6px;line-height:2.6px;color:#b0b0b0;">›</div><div class="b" style="left:18.30px;top:55.90px;width:109.50px;height:0.50px;background:#d6d6d6;"></div><div class="b" style="left:21.20px;top:52.00px;width:1.80px;height:1.80px;background:#5b606b;border-radius:.5px"></div><div class="t" style="left:24.70px;top:51.70px;font-size:2.4px;line-height:2.4px;color:#3b3f47;">Библиотека</div><div class="b" style="left:121.30px;top:52.00px;width:1.60px;height:1.60px;background:#cfcfcf;border-radius:50%"></div><div class="t" style="left:124.30px;top:51.60px;font-size:2.6px;line-height:2.6px;color:#b0b0b0;">›</div><div class="b" style="left:18.30px;top:56.40px;width:109.50px;height:3.20px;background:#dfe1e6;"></div><div class="t" style="left:20.90px;top:57.00px;font-size:2.1px;line-height:2.1px;color:#5a6275;">Актив сайта</div><div class="b" style="left:18.30px;top:65.80px;width:109.50px;height:0.50px;background:#d6d6d6;"></div><div class="b" style="left:21.20px;top:62.00px;width:1.80px;height:1.80px;background:#5b606b;border-radius:.5px"></div><div class="t" style="left:24.70px;top:61.70px;font-size:2.4px;line-height:2.4px;color:#3b3f47;">Пользователи</div><div class="b" style="left:121.30px;top:62.00px;width:1.60px;height:1.60px;background:#cfcfcf;border-radius:50%"></div><div class="t" style="left:124.30px;top:61.60px;font-size:2.6px;line-height:2.6px;color:#b0b0b0;">›</div><div class="b" style="left:18.30px;top:71.90px;width:109.50px;height:0.50px;background:#d6d6d6;"></div><div class="b" style="left:21.20px;top:68.70px;width:1.80px;height:1.80px;background:#5b606b;border-radius:.5px"></div><div class="t" style="left:24.70px;top:68.40px;font-size:2.4px;line-height:2.4px;color:#3b3f47;">Фотоальбомы</div><div class="b" style="left:121.30px;top:68.70px;width:1.60px;height:1.60px;background:#cfcfcf;border-radius:50%"></div><div class="t" style="left:124.30px;top:68.30px;font-size:2.6px;line-height:2.6px;color:#b0b0b0;">›</div><div class="b" style="left:18.30px;top:72.40px;width:109.50px;height:6.10px;background:#6c7791;"></div><div class="t" style="left:33.30px;top:74.50px;font-size:2.3px;line-height:2.3px;color:#aab3c6;">Вход</div><div class="t" style="left:70.30px;top:74.50px;font-size:2.3px;line-height:2.3px;color:#aab3c6;">FAQ</div><div class="t" style="left:105.30px;top:74.50px;font-size:2.3px;line-height:2.3px;color:#aab3c6;">Онлайн</div><div class="t" style="left:18.30px;top:80.90px;font-size:1.9px;line-height:1.9px;color:#7f8aa1;"><div style="width:109.5px;text-align:center">Powered by mobiCMS</div></div><div class="t" style="left:18.30px;top:83.10px;font-size:1.9px;line-height:1.9px;color:#7f8aa1;"><div style="width:109.5px;text-align:center">Copyright © 2014</div></div><div class="t" style="left:18.30px;top:85.30px;font-size:1.9px;line-height:1.9px;color:#7f8aa1;"><div style="width:109.5px;text-align:center">mobicms.net</div></div><div class="t" style="left:18.30px;top:87.50px;font-size:1.9px;line-height:1.9px;color:#7f8aa1;"><div style="width:109.5px;text-align:center">0.0541</div></div></div><div class="cap"><div class="cw" style="letter-spacing:-0.61px;"><svg class="ic" width="9.4" height="9" viewBox="0 0 9.4 9"><rect x="0.3" y="0.3" width="2.2" height="2.2" rx=".5" fill="#5a6985"/><rect x="7.1" y="0.3" width="2.2" height="2.2" rx=".5" fill="#5a6985"/><rect x="0.3" y="3.4" width="2.2" height="2.2" rx=".5" fill="#8f9bb0"/><rect x="3.7" y="3.4" width="2.2" height="2.2" rx=".5" fill="#5a6985"/><rect x="7.1" y="3.4" width="2.2" height="2.2" rx=".5" fill="#8f9bb0"/><rect x="0.3" y="6.5" width="2.2" height="2.2" rx=".5" fill="#5a6985"/><rect x="3.7" y="6.5" width="2.2" height="2.2" rx=".5" fill="#8f9bb0"/><rect x="7.1" y="6.5" width="2.2" height="2.2" rx=".5" fill="#5a6985"/></svg>mobiCMS</div></div></div>
<div class="tile abs" style="left:326.10px;top:224.10px"><div class="th" style="background:#5c667a"><div class="t" style="left:18.20px;top:1.30px;font-size:2.4px;line-height:2.4px;color:#c9cedb;font-weight:bold">mobiCMS</div><div class="b" style="left:16.70px;top:5.50px;width:111.70px;height:0.50px;background:#7a859e;"></div><div class="b" style="left:16.70px;top:6.30px;width:111.70px;height:6.70px;background:#6c7791;"></div><div class="t" style="left:16.70px;top:8.20px;font-size:2.8px;line-height:2.8px;color:#fff;font-weight:bold"><div style="width:111.7px;text-align:center">Тест страницы</div></div><div class="b" style="left:16.70px;top:13.00px;width:111.70px;height:96.00px;background:#e7e7e7;"></div><div class="t" style="left:20.30px;top:19.30px;font-size:4px;line-height:4px;color:#3a3f49;">mobiCMS <span style="font-size:2.3px;color:#777">Шаблон</span></div><div class="b" style="left:24.30px;top:25.90px;width:0.90px;height:0.90px;background:#666;"></div><div class="t" style="left:26.30px;top:25.10px;font-size:2.2px;line-height:2.2px;color:#6a6f7a;">Главная</div><div class="b" style="left:24.30px;top:28.75px;width:0.90px;height:0.90px;background:#666;"></div><div class="t" style="left:26.30px;top:27.95px;font-size:2.2px;line-height:2.2px;color:#6a6f7a;">Список страниц</div><div class="b" style="left:24.30px;top:31.60px;width:0.90px;height:0.90px;background:#666;"></div><div class="t" style="left:26.30px;top:30.80px;font-size:2.2px;line-height:2.2px;color:#6a6f7a;">Панели (Panel)</div><div class="t" style="left:20.30px;top:35.90px;font-size:4px;line-height:4px;color:#3a3f49;">mobiCMS <span style="font-size:2.3px;color:#777">Модули</span></div><div class="b" style="left:24.30px;top:42.70px;width:0.90px;height:0.90px;background:#666;"></div><div class="t" style="left:26.30px;top:41.90px;font-size:2.2px;line-height:2.2px;color:#6a6f7a;">Архив новостей</div><div class="b" style="left:24.30px;top:45.60px;width:0.90px;height:0.90px;background:#666;"></div><div class="t" style="left:26.30px;top:44.80px;font-size:2.2px;line-height:2.2px;color:#6a6f7a;">Гостевая (Guestbook)</div><div class="b" style="left:30.30px;top:48.50px;width:0.90px;height:0.90px;background:#666;"></div><div class="t" style="left:32.30px;top:47.70px;font-size:2.2px;line-height:2.2px;color:#6a6f7a;">Добавить сообщение</div><div class="b" style="left:30.30px;top:51.40px;width:0.90px;height:0.90px;background:#666;"></div><div class="t" style="left:32.30px;top:50.60px;font-size:2.2px;line-height:2.2px;color:#6a6f7a;">Очистить гостевую</div><div class="b" style="left:30.30px;top:54.30px;width:0.90px;height:0.90px;background:#666;"></div><div class="t" style="left:32.30px;top:53.50px;font-size:2.2px;line-height:2.2px;color:#6a6f7a;">Модерировать</div><div class="b" style="left:30.30px;top:57.20px;width:0.90px;height:0.90px;background:#666;"></div><div class="t" style="left:32.30px;top:56.40px;font-size:2.2px;line-height:2.2px;color:#6a6f7a;">Настройки</div><div class="b" style="left:24.30px;top:60.30px;width:0.90px;height:0.90px;background:#666;"></div><div class="t" style="left:26.30px;top:59.50px;font-size:2.2px;line-height:2.2px;color:#6a6f7a;">Загрузки (Download)</div><div class="b" style="left:24.30px;top:66.00px;width:0.90px;height:0.90px;background:#666;"></div><div class="t" style="left:26.30px;top:65.20px;font-size:2.2px;line-height:2.2px;color:#6a6f7a;">Личное</div><div class="b" style="left:24.30px;top:68.90px;width:0.90px;height:0.90px;background:#666;"></div><div class="t" style="left:26.30px;top:68.10px;font-size:2.2px;line-height:2.2px;color:#6a6f7a;">Кабинет</div><div class="b" style="left:24.30px;top:71.80px;width:0.90px;height:0.90px;background:#666;"></div><div class="t" style="left:26.30px;top:71.00px;font-size:2.2px;line-height:2.2px;color:#6a6f7a;">Форум</div><div class="b" style="left:24.30px;top:74.70px;width:0.90px;height:0.90px;background:#666;"></div><div class="t" style="left:26.30px;top:73.90px;font-size:2.2px;line-height:2.2px;color:#6a6f7a;">Журнал</div><div class="b" style="left:24.30px;top:77.60px;width:0.90px;height:0.90px;background:#666;"></div><div class="t" style="left:26.30px;top:76.80px;font-size:2.2px;line-height:2.2px;color:#6a6f7a;">Библиотека</div><div class="b" style="left:24.30px;top:80.50px;width:0.90px;height:0.90px;background:#666;"></div><div class="t" style="left:26.30px;top:79.70px;font-size:2.2px;line-height:2.2px;color:#6a6f7a;">Пользователи</div><div class="b" style="left:24.30px;top:83.40px;width:0.90px;height:0.90px;background:#666;"></div><div class="t" style="left:26.30px;top:82.60px;font-size:2.2px;line-height:2.2px;color:#6a6f7a;">Фотоальбомы</div><div class="t" style="left:20.30px;top:87.50px;font-size:4px;line-height:4px;color:#3a3f49;">mobiCMS <span style="font-size:2.3px;color:#777">Элементы оформления</span></div><div class="b" style="left:24.30px;top:94.50px;width:0.90px;height:0.90px;background:#666;"></div><div class="t" style="left:26.30px;top:93.70px;font-size:2.2px;line-height:2.2px;color:#6a6f7a;">Формы (Form builder)</div><div class="t" style="left:20.30px;top:98.90px;font-size:3.4px;line-height:3.4px;color:#3a3f49;font-weight:bold">Bootstrap</div><div class="b" style="left:24.30px;top:105.30px;width:0.90px;height:0.90px;background:#666;"></div><div class="t" style="left:26.30px;top:104.50px;font-size:2.2px;line-height:2.2px;color:#6a6f7a;">Типографика</div><div class="b" style="left:24.30px;top:108.20px;width:0.90px;height:0.90px;background:#666;"></div><div class="t" style="left:26.30px;top:107.40px;font-size:2.2px;line-height:2.2px;color:#6a6f7a;">CSS</div></div><div class="cap"><div class="cw" style="letter-spacing:-0.35px;"><svg class="ic" width="9.4" height="9" viewBox="0 0 9.4 9"><rect x="0.3" y="0.3" width="2.2" height="2.2" rx=".5" fill="#5a6985"/><rect x="7.1" y="0.3" width="2.2" height="2.2" rx=".5" fill="#5a6985"/><rect x="0.3" y="3.4" width="2.2" height="2.2" rx=".5" fill="#8f9bb0"/><rect x="3.7" y="3.4" width="2.2" height="2.2" rx=".5" fill="#5a6985"/><rect x="7.1" y="3.4" width="2.2" height="2.2" rx=".5" fill="#8f9bb0"/><rect x="0.3" y="6.5" width="2.2" height="2.2" rx=".5" fill="#5a6985"/><rect x="3.7" y="6.5" width="2.2" height="2.2" rx=".5" fill="#8f9bb0"/><rect x="7.1" y="6.5" width="2.2" height="2.2" rx=".5" fill="#5a6985"/></svg>Design Template</div></div></div>
<div class="tile abs" style="left:483.60px;top:224.10px"><div class="th" style="background:#5c667a"><div class="t" style="left:19.80px;top:1.30px;font-size:2.4px;line-height:2.4px;color:#c9cedb;font-weight:bold">mobiCMS</div><div class="t" style="left:81.30px;top:1.50px;font-size:2.2px;line-height:2.2px;color:#aeb6c7;">Администрация</div><div class="t" style="left:102.80px;top:1.50px;font-size:2.2px;line-height:2.2px;color:#aeb6c7;">Кабинет</div><div class="t" style="left:115.80px;top:1.50px;font-size:2.2px;line-height:2.2px;color:#aeb6c7;">Выход</div><div class="b" style="left:18.30px;top:5.50px;width:109.50px;height:0.50px;background:#7a859e;"></div><div class="b" style="left:18.30px;top:6.30px;width:109.50px;height:6.70px;background:#6c7791;"></div><div class="t" style="left:18.30px;top:8.20px;font-size:2.8px;line-height:2.8px;color:#fff;font-weight:bold"><div style="width:109.5px;text-align:center">Добро пожаловать</div></div><div class="b" style="left:18.30px;top:13.00px;width:109.50px;height:59.40px;background:#e7e7e7;"></div><div class="b" style="left:18.30px;top:13.00px;width:109.50px;height:3.30px;background:#dfe1e6;"></div><div class="t" style="left:20.90px;top:13.60px;font-size:2.1px;line-height:2.1px;color:#5a6275;">Информация</div><div class="b" style="left:18.30px;top:22.40px;width:109.50px;height:0.50px;background:#d6d6d6;"></div><div class="b" style="left:21.20px;top:18.70px;width:1.80px;height:1.80px;background:#5b606b;border-radius:.5px"></div><div class="t" style="left:24.70px;top:18.40px;font-size:2.4px;line-height:2.4px;color:#3b3f47;">Архив новостей</div><div class="b" style="left:121.30px;top:18.70px;width:1.60px;height:1.60px;background:#cfcfcf;border-radius:50%"></div><div class="t" style="left:124.30px;top:18.30px;font-size:2.6px;line-height:2.6px;color:#b0b0b0;">›</div><div class="b" style="left:18.30px;top:22.90px;width:109.50px;height:3.30px;background:#dfe1e6;"></div><div class="t" style="left:20.90px;top:23.50px;font-size:2.1px;line-height:2.1px;color:#5a6275;">Общение</div><div class="b" style="left:18.30px;top:32.40px;width:109.50px;height:0.50px;background:#d6d6d6;"></div><div class="b" style="left:21.20px;top:28.60px;width:1.80px;height:1.80px;background:#5b606b;border-radius:.5px"></div><div class="t" style="left:24.70px;top:28.30px;font-size:2.4px;line-height:2.4px;color:#3b3f47;">Гостевая</div><div class="b" style="left:121.30px;top:28.60px;width:1.60px;height:1.60px;background:#cfcfcf;border-radius:50%"></div><div class="t" style="left:124.30px;top:28.20px;font-size:2.6px;line-height:2.6px;color:#b0b0b0;">›</div><div class="b" style="left:18.30px;top:39.20px;width:109.50px;height:0.50px;background:#d6d6d6;"></div><div class="b" style="left:21.20px;top:35.30px;width:1.80px;height:1.80px;background:#5b606b;border-radius:.5px"></div><div class="t" style="left:24.70px;top:35.00px;font-size:2.4px;line-height:2.4px;color:#3b3f47;">Форум</div><div class="b" style="left:121.30px;top:35.30px;width:1.60px;height:1.60px;background:#cfcfcf;border-radius:50%"></div><div class="t" style="left:124.30px;top:34.90px;font-size:2.6px;line-height:2.6px;color:#b0b0b0;">›</div><div class="b" style="left:18.30px;top:39.70px;width:109.50px;height:3.20px;background:#dfe1e6;"></div><div class="t" style="left:20.90px;top:40.30px;font-size:2.1px;line-height:2.1px;color:#5a6275;">Полезное</div><div class="b" style="left:18.30px;top:49.10px;width:109.50px;height:0.50px;background:#d6d6d6;"></div><div class="b" style="left:21.20px;top:45.30px;width:1.80px;height:1.80px;background:#5b606b;border-radius:.5px"></div><div class="t" style="left:24.70px;top:45.00px;font-size:2.4px;line-height:2.4px;color:#3b3f47;">Загрузки</div><div class="b" style="left:121.30px;top:45.30px;width:1.60px;height:1.60px;background:#cfcfcf;border-radius:50%"></div><div class="t" style="left:124.30px;top:44.90px;font-size:2.6px;line-height:2.6px;color:#b0b0b0;">›</div><div class="b" style="left:18.30px;top:55.90px;width:109.50px;height:0.50px;background:#d6d6d6;"></div><div class="b" style="left:21.20px;top:52.00px;width:1.80px;height:1.80px;background:#5b606b;border-radius:.5px"></div><div class="t" style="left:24.70px;top:51.70px;font-size:2.4px;line-height:2.4px;color:#3b3f47;">Библиотека</div><div class="b" style="left:121.30px;top:52.00px;width:1.60px;height:1.60px;background:#cfcfcf;border-radius:50%"></div><div class="t" style="left:124.30px;top:51.60px;font-size:2.6px;line-height:2.6px;color:#b0b0b0;">›</div><div class="b" style="left:18.30px;top:56.40px;width:109.50px;height:3.20px;background:#dfe1e6;"></div><div class="t" style="left:20.90px;top:57.00px;font-size:2.1px;line-height:2.1px;color:#5a6275;">Актив сайта</div><div class="b" style="left:18.30px;top:65.80px;width:109.50px;height:0.50px;background:#d6d6d6;"></div><div class="b" style="left:21.20px;top:62.00px;width:1.80px;height:1.80px;background:#5b606b;border-radius:.5px"></div><div class="t" style="left:24.70px;top:61.70px;font-size:2.4px;line-height:2.4px;color:#3b3f47;">Пользователи</div><div class="b" style="left:121.30px;top:62.00px;width:1.60px;height:1.60px;background:#cfcfcf;border-radius:50%"></div><div class="t" style="left:124.30px;top:61.60px;font-size:2.6px;line-height:2.6px;color:#b0b0b0;">›</div><div class="b" style="left:18.30px;top:71.90px;width:109.50px;height:0.50px;background:#d6d6d6;"></div><div class="b" style="left:21.20px;top:68.70px;width:1.80px;height:1.80px;background:#5b606b;border-radius:.5px"></div><div class="t" style="left:24.70px;top:68.40px;font-size:2.4px;line-height:2.4px;color:#3b3f47;">Фотоальбомы</div><div class="b" style="left:121.30px;top:68.70px;width:1.60px;height:1.60px;background:#cfcfcf;border-radius:50%"></div><div class="t" style="left:124.30px;top:68.30px;font-size:2.6px;line-height:2.6px;color:#b0b0b0;">›</div><div class="b" style="left:18.30px;top:72.40px;width:109.50px;height:6.10px;background:#6c7791;"></div><div class="t" style="left:33.30px;top:74.50px;font-size:2.3px;line-height:2.3px;color:#aab3c6;">Вход</div><div class="t" style="left:70.30px;top:74.50px;font-size:2.3px;line-height:2.3px;color:#aab3c6;">FAQ</div><div class="t" style="left:105.30px;top:74.50px;font-size:2.3px;line-height:2.3px;color:#aab3c6;">Онлайн</div><div class="t" style="left:18.30px;top:80.90px;font-size:1.9px;line-height:1.9px;color:#7f8aa1;"><div style="width:109.5px;text-align:center">Powered by mobiCMS</div></div><div class="t" style="left:18.30px;top:83.10px;font-size:1.9px;line-height:1.9px;color:#7f8aa1;"><div style="width:109.5px;text-align:center">Copyright © 2014</div></div><div class="t" style="left:18.30px;top:85.30px;font-size:1.9px;line-height:1.9px;color:#7f8aa1;"><div style="width:109.5px;text-align:center">mobicms.net</div></div><div class="t" style="left:18.30px;top:87.50px;font-size:1.9px;line-height:1.9px;color:#7f8aa1;"><div style="width:109.5px;text-align:center">0.0541</div></div></div><div class="cap"><div class="cw" style="letter-spacing:-0.85px;"><svg class="ic" width="9.4" height="9" viewBox="0 0 9.4 9"><rect x="0.3" y="0.3" width="2.2" height="2.2" rx=".5" fill="#5a6985"/><rect x="7.1" y="0.3" width="2.2" height="2.2" rx=".5" fill="#5a6985"/><rect x="0.3" y="3.4" width="2.2" height="2.2" rx=".5" fill="#8f9bb0"/><rect x="3.7" y="3.4" width="2.2" height="2.2" rx=".5" fill="#5a6985"/><rect x="7.1" y="3.4" width="2.2" height="2.2" rx=".5" fill="#8f9bb0"/><rect x="0.3" y="6.5" width="2.2" height="2.2" rx=".5" fill="#5a6985"/><rect x="3.7" y="6.5" width="2.2" height="2.2" rx=".5" fill="#8f9bb0"/><rect x="7.1" y="6.5" width="2.2" height="2.2" rx=".5" fill="#5a6985"/></svg>TMP</div></div></div>
<div class="tile abs" style="left:641.10px;top:224.10px"><div class="th" style="background:#fdfdfd"><div class="t" style="left:0.60px;top:1.50px;font-size:2.3px;line-height:2.3px;color:#222;font-family:'Liberation Mono',monospace;white-space:pre;font-weight:bold">Array</div><div class="t" style="left:0.60px;top:3.70px;font-size:2.3px;line-height:2.3px;color:#222;font-family:'Liberation Mono',monospace;white-space:pre;font-weight:bold">(</div><div class="t" style="left:5.60px;top:5.50px;font-size:2.3px;line-height:2.3px;color:#222;font-family:'Liberation Mono',monospace;white-space:pre;font-weight:bold">[form] =&gt; login</div><div class="t" style="left:5.60px;top:7.72px;font-size:2.3px;line-height:2.3px;color:#222;font-family:'Liberation Mono',monospace;white-space:pre;font-weight:bold">[id] =&gt; 145</div><div class="t" style="left:5.60px;top:9.94px;font-size:2.3px;line-height:2.3px;color:#222;font-family:'Liberation Mono',monospace;white-space:pre;font-weight:bold">[name] =&gt; Me</div><div class="t" style="left:5.60px;top:12.16px;font-size:2.3px;line-height:2.3px;color:#222;font-family:'Liberation Mono',monospace;white-space:pre;font-weight:bold">[mail] =&gt; a@b.co</div><div class="t" style="left:5.60px;top:14.38px;font-size:2.3px;line-height:2.3px;color:#222;font-family:'Liberation Mono',monospace;white-space:pre;font-weight:bold">[sex] =&gt; male</div><div class="t" style="left:5.60px;top:16.60px;font-size:2.3px;line-height:2.3px;color:#222;font-family:'Liberation Mono',monospace;white-space:pre;font-weight:bold">[about] =&gt; Lorem ipsum text</div><div class="t" style="left:0.60px;top:18.50px;font-size:2.3px;line-height:2.3px;color:#222;font-family:'Liberation Mono',monospace;white-space:pre;font-weight:bold">)</div><div class="t" style="left:1.40px;top:23.30px;font-size:2.3px;line-height:2.3px;color:#222;font-weight:bold">Name:</div><div class="b" style="left:8.40px;top:22.30px;width:12.80px;height:3.20px;background:#fff;border:.5px solid #cfcfcf"></div></div><div class="cap"><div class="cw" style="letter-spacing:-0.52px;">mobiCMS Form</div></div></div>
<div class="tile abs" style="left:11.10px;top:356.20px"><div class="th" style="background:#fdfdfd"></div><div class="cap"><div class="cw" style=""><svg class="ic" width="9" height="9" viewBox="0 0 9 9"><path d="M5.6 0.4 H8 V5.4 H0.8 V3.4 H2.8 V4 H5.6 Z" fill="#33595d"/><rect x="0.4" y="6" width="8.2" height="2.7" fill="#e8323a"/></svg>gazenwagen.com</div></div></div>
<div class="tile abs" style="left:168.60px;top:356.20px"><div class="th" style="background:#fdfdfd"></div><div class="cap"><div class="cw" style="letter-spacing:-0.42px;"><svg class="ic" width="9" height="9" viewBox="0 0 9 9"><path d="M5.6 0.4 H8 V5.4 H0.8 V3.4 H2.8 V4 H5.6 Z" fill="#33595d"/><rect x="0.4" y="6" width="8.2" height="2.7" fill="#e8323a"/></svg>johncms.com</div></div></div>
<div class="tile abs" style="left:326.10px;top:356.20px"><div class="th" style="background:#fdfdfd"><div class="t" style="left:1.40px;top:1.10px;font-size:4.8px;line-height:4.8px;color:#111;font-family:'Liberation Serif',serif;font-weight:bold;letter-spacing:-.1px">Not Found</div><div class="t" style="left:1.20px;top:9.60px;font-size:2.5px;line-height:2.5px;color:#111;font-family:'Liberation Serif',serif;font-weight:bold">The requested URL /2plus.ru/ was not found on this server.</div></div><div class="cap"><div class="cw" style="letter-spacing:-0.19px;">2plus.ru</div></div></div>
<div class="tile abs" style="left:483.60px;top:356.20px"><div class="th" style="background:#fefefe"><div class="t" style="left:30.00px;top:0.20px;font-size:6.2px;line-height:6.2px;color:#111;font-weight:bold;letter-spacing:-.5px">TeRo</div><div class="b" style="left:43.80px;top:0.80px;width:4.60px;height:4.60px;background:transparent;border:.7px solid #6a9fd0;border-radius:50%"></div><div class="t" style="left:48.40px;top:2.60px;font-size:2.4px;line-height:2.4px;color:#5a8fc8;font-style:italic">Maritime</div><div class="b" style="left:29.90px;top:6.20px;width:86.60px;height:5.00px;background:#4a7eb6;border-top:.6px solid #2f5f98;border-bottom:.6px solid #2f5f98"></div><div class="t" style="left:29.90px;top:7.40px;font-size:2.9px;line-height:2.9px;color:#e8f0fa;font-weight:bold"><div style="width:86.6px;text-align:center">Shipowning &amp; Shipbroking Agency</div></div><div class="b" style="left:29.90px;top:12.80px;width:21.00px;height:95.60px;background:#3f74ad;"></div><div class="t" style="left:33.00px;top:16.40px;font-size:2.3px;line-height:2.3px;color:#dbe7f5;font-weight:bold">Ship Brokers</div><div class="b" style="left:32.40px;top:20.20px;width:16.00px;height:7.60px;background:#9fb9d6;border:.4px solid #c9d8ea"></div><div class="t" style="left:31.80px;top:30.80px;font-size:1.7px;line-height:1.7px;color:#9fbde0;">Tero Maritime is</div><div class="t" style="left:31.80px;top:32.70px;font-size:1.7px;line-height:1.7px;color:#9fbde0;">a shipbroking and</div><div class="t" style="left:31.80px;top:34.60px;font-size:1.7px;line-height:1.7px;color:#9fbde0;">ship agency firm</div><div class="t" style="left:31.80px;top:36.50px;font-size:1.7px;line-height:1.7px;color:#9fbde0;">based in the port</div><div class="t" style="left:31.80px;top:38.40px;font-size:1.7px;line-height:1.7px;color:#9fbde0;">of Odessa, Ukraine</div><div class="t" style="left:31.80px;top:40.30px;font-size:1.7px;line-height:1.7px;color:#9fbde0;">serving owners</div><div class="t" style="left:31.80px;top:42.20px;font-size:1.7px;line-height:1.7px;color:#9fbde0;">Tero Maritime is</div><div class="t" style="left:31.80px;top:44.10px;font-size:1.7px;line-height:1.7px;color:#9fbde0;">a shipbroking and</div><div class="t" style="left:31.80px;top:46.00px;font-size:1.7px;line-height:1.7px;color:#9fbde0;">ship agency firm</div><div class="t" style="left:31.80px;top:47.90px;font-size:1.7px;line-height:1.7px;color:#9fbde0;">based in the port</div><div class="t" style="left:31.80px;top:49.80px;font-size:1.7px;line-height:1.7px;color:#9fbde0;">of Odessa, Ukraine</div><div class="t" style="left:31.80px;top:51.70px;font-size:1.7px;line-height:1.7px;color:#9fbde0;">serving owners</div><div class="t" style="left:31.80px;top:53.60px;font-size:1.7px;line-height:1.7px;color:#9fbde0;">Tero Maritime is</div><div class="t" style="left:31.80px;top:55.50px;font-size:1.7px;line-height:1.7px;color:#9fbde0;">a shipbroking and</div><div class="t" style="left:31.80px;top:57.40px;font-size:1.7px;line-height:1.7px;color:#9fbde0;">ship agency firm</div><div class="t" style="left:31.80px;top:59.30px;font-size:1.7px;line-height:1.7px;color:#9fbde0;">based in the port</div><div class="t" style="left:31.80px;top:61.20px;font-size:1.7px;line-height:1.7px;color:#9fbde0;">of Odessa, Ukraine</div><div class="t" style="left:31.80px;top:60.40px;font-size:2.2px;line-height:2.2px;color:#e6eefa;font-weight:bold">Main Pages</div><div class="t" style="left:31.80px;top:63.40px;font-size:1.7px;line-height:1.7px;color:#9fbde0;">Company profile</div><div class="t" style="left:31.80px;top:65.30px;font-size:1.7px;line-height:1.7px;color:#9fbde0;">Ship agency</div><div class="t" style="left:31.80px;top:67.20px;font-size:1.7px;line-height:1.7px;color:#9fbde0;">Chartering</div><div class="t" style="left:31.80px;top:69.10px;font-size:1.7px;line-height:1.7px;color:#9fbde0;">Contacts</div><div class="t" style="left:31.80px;top:71.00px;font-size:1.7px;line-height:1.7px;color:#9fbde0;">Company profile</div><div class="t" style="left:31.80px;top:72.90px;font-size:1.7px;line-height:1.7px;color:#9fbde0;">Ship agency</div><div class="t" style="left:31.80px;top:74.80px;font-size:1.7px;line-height:1.7px;color:#9fbde0;">Chartering</div><div class="t" style="left:31.80px;top:76.70px;font-size:1.7px;line-height:1.7px;color:#9fbde0;">Contacts</div><div class="b" style="left:52.40px;top:13.30px;width:64.00px;height:3.30px;background:#1f4d86;"></div><div class="b" style="left:52.40px;top:13.30px;width:6.40px;height:3.30px;background:#7fa6d3;"></div><div class="t" style="left:53.40px;top:14.00px;font-size:2px;line-height:2px;color:#fff;font-weight:bold">Home</div><div class="t" style="left:60.40px;top:14.00px;font-size:1.9px;line-height:1.9px;color:#7f9fc9;white-space:pre">Services  Agency  Fleet  Ports  Contacts</div><div class="b" style="left:52.40px;top:16.60px;width:64.00px;height:3.20px;background:#4a7eb6;"></div><div class="t" style="left:53.60px;top:17.20px;font-size:2.2px;line-height:2.2px;color:#fff;font-weight:bold">Main Page</div><div class="b" style="left:52.80px;top:20.80px;width:62.80px;height:37.00px;background:#8fa6c6;"></div><svg class="b" style="left:52.80px;top:20.80px" width="62.8" height="37" viewBox="0 0 62.8 37"><rect width="62.8" height="37" fill="#8ea5c5"/><path d="M62.8 0 H44 C42 6 45 10 50 14 L58 20 L62.8 22 Z" fill="#8297b8"/><path d="M5 22 C10 17 22 18 30 14 C32 8 36 3 42 2 C44 5 42 8 40 11 C46 13 52 18 56 24 C52 30 40 30 30 31 C20 33 10 33 6 29 Z" fill="#b9c6da"/><path d="M34 4 C38 1 42 1 43 4 C41 8 37 10 33 9 Z" fill="#c6d0e0"/><rect x="1" y="1.6" width="29" height="13" fill="#7f9fc7"/><circle cx="9.6" cy="31.2" r="1" fill="#1a2fc0"/><circle cx="56.2" cy="22.6" r="1" fill="#2030b8"/><circle cx="57.4" cy="25.4" r="1" fill="#5a2a9a"/><circle cx="57.6" cy="28.4" r="1" fill="#6a2a8a"/></svg><div class="t" style="left:54.80px;top:23.80px;font-size:2.2px;line-height:2.2px;color:#eef3fa;">Ship Agency Services:</div><div class="t" style="left:54.80px;top:26.40px;font-size:2.2px;line-height:2.2px;color:#eef3fa;">Ukr. Sea &amp; River Ports</div><div class="t" style="left:54.80px;top:29.00px;font-size:2.2px;line-height:2.2px;color:#eef3fa;">Ship Owners Representation</div><div class="t" style="left:54.80px;top:31.60px;font-size:2.2px;line-height:2.2px;color:#eef3fa;">Odessa, Ukraine Ports</div><div class="t" style="left:75.40px;top:41.40px;font-size:2.4px;line-height:2.4px;color:#9aa9c2;font-weight:bold">Black Sea</div><div class="b" style="left:52.80px;top:59.10px;width:63.20px;height:4.30px;background:#3f74ad;"></div><div class="t" style="left:52.80px;top:60.00px;font-size:2.6px;line-height:2.6px;color:#e6eefa;font-weight:bold"><div style="width:63.2px;text-align:center">Tero Maritime Co. Ltd.</div></div><div class="t" style="left:52.80px;top:67.00px;font-size:1.95px;line-height:1.95px;color:#333;">Our office has located in Odessa, Ukraine, near the port. We operate</div><div class="t" style="left:52.80px;top:69.40px;font-size:1.95px;line-height:1.95px;color:#333;">throughout Black Sea ports</div><div class="t" style="left:52.80px;top:71.80px;font-size:2px;line-height:2px;color:#2233dd;text-decoration:none">Services</div><div class="t" style="left:52.80px;top:74.10px;font-size:2px;line-height:2px;color:#2233dd;text-decoration:none">Fleet</div><div class="t" style="left:52.80px;top:76.40px;font-size:2px;line-height:2px;color:#2233dd;text-decoration:none">Contacts</div><div class="t" style="left:89.40px;top:71.80px;font-size:2px;line-height:2px;color:#2233dd;">• Ship Agency</div><div class="t" style="left:89.40px;top:74.10px;font-size:2px;line-height:2px;color:#2233dd;">• Freight Forwarding</div><div class="t" style="left:89.40px;top:76.40px;font-size:2px;line-height:2px;color:#2233dd;">• Shipping</div><div class="b" style="left:52.80px;top:82.20px;width:63.00px;height:1.60px;background:#cfcfcf;"></div><div class="t" style="left:52.80px;top:86.40px;font-size:1.95px;line-height:1.95px;color:#2b2b2b;">The Company was founded in 1993 by the Black Sea Shipping Co.</div><div class="t" style="left:52.80px;top:88.45px;font-size:1.95px;line-height:1.95px;color:#2b2b2b;">professionals. Ship Agency, Forwarding, Chartering, Ship Supply</div><div class="t" style="left:52.80px;top:90.50px;font-size:1.95px;line-height:1.95px;color:#2b2b2b;">Following an active and strict principles of operation, TeRo has won</div><div class="t" style="left:52.80px;top:92.55px;font-size:1.95px;line-height:1.95px;color:#2b2b2b;">the name of reliable partner for ship-owners, charterers and traders.</div><div class="t" style="left:52.80px;top:94.60px;font-size:1.95px;line-height:1.95px;color:#2b2b2b;">We provide a full range of agency services at the Ukrainian ports</div><div class="t" style="left:52.80px;top:96.65px;font-size:1.95px;line-height:1.95px;color:#2b2b2b;">The Company was founded in 1993 by the Black Sea Shipping Co.</div><div class="t" style="left:52.80px;top:98.70px;font-size:1.95px;line-height:1.95px;color:#2b2b2b;">professionals. Ship Agency, Forwarding, Chartering, Ship Supply</div><div class="t" style="left:52.80px;top:100.75px;font-size:1.95px;line-height:1.95px;color:#2b2b2b;">Following an active and strict principles of operation, TeRo has won</div><div class="t" style="left:52.80px;top:102.80px;font-size:1.95px;line-height:1.95px;color:#2b2b2b;">the name of reliable partner for ship-owners, charterers and traders.</div><div class="t" style="left:52.80px;top:104.85px;font-size:1.95px;line-height:1.95px;color:#2b2b2b;">We provide a full range of agency services at the Ukrainian ports</div><div class="t" style="left:52.80px;top:106.90px;font-size:1.95px;line-height:1.95px;color:#2b2b2b;">The Company was founded in 1993 by the Black Sea Shipping Co.</div></div><div class="cap"><div class="cw" style="text-align:left;"><svg class="ic" width="9" height="9" viewBox="0 0 9 9"><path d="M0.6 1.4 L2.6 0.8 L3.6 7.6 L1.8 8.2 Z" fill="#e2342d"/><path d="M3.6 2.2 L5.4 1.8 L5.8 8 L4 8.2 Z" fill="#f2b632"/><path d="M6 0.6 L8.4 1.6 L7.2 6.6 L5.6 6 Z" fill="#2c63c8"/></svg>Agency &quot;TeRo&quot;. Full Shipping, Forwarding, .</div></div></div>
<div class="tile abs" style="left:11.10px;top:488.30px"><div class="th" style="background:#fefefe"><div class="b" style="left:0.00px;top:0.30px;width:146.40px;height:2.00px;background:linear-gradient(#cfcfcf,#f4f4f4);"></div><div class="t" style="left:2.90px;top:6.70px;font-size:7.6px;line-height:7.6px;color:#222;font-weight:bold;font-style:italic;letter-spacing:-.2px"><span style="color:#2a6fca">My</span><span style="color:#1d2b4d">SVN</span></div><div class="t" style="left:8.90px;top:14.10px;font-size:1.7px;line-height:1.7px;color:#222;"><span style="color:#777">профессиональный хостинг </span><span style="color:#2a6fca">Subversion </span><span style="color:#d33">&amp; Trac</span></div><div class="t" style="left:117.50px;top:4.50px;font-size:1.9px;line-height:1.9px;color:#333;">Логин:</div><div class="b" style="left:125.30px;top:3.90px;width:15.40px;height:2.60px;background:#fff;border:.5px solid #9db6d6"></div><div class="t" style="left:117.50px;top:7.90px;font-size:1.9px;line-height:1.9px;color:#333;">Пароль:</div><div class="b" style="left:125.30px;top:7.30px;width:15.40px;height:2.60px;background:#fff;border:.5px solid #9db6d6"></div><div class="b" style="left:141.90px;top:7.70px;width:1.60px;height:1.60px;background:#555;border-radius:50%"></div><div class="t" style="left:127.30px;top:11.30px;font-size:1.7px;line-height:1.7px;color:#c66;">Запомнить</div><div class="b" style="left:125.40px;top:13.90px;width:10.50px;height:2.40px;background:#1f6fc2;border-radius:.5px"></div><div class="t" style="left:124.90px;top:17.30px;font-size:1.7px;line-height:1.7px;color:#555;">Забыли пароль?</div><div class="b" style="left:2.00px;top:21.10px;width:142.20px;height:5.20px;background:linear-gradient(#2b85c2,#155f96);border-top:.5px solid #6fb0dd"></div><div class="t" style="left:5.90px;top:22.70px;font-size:2.3px;line-height:2.3px;color:#fff;font-weight:bold">Главная</div><div class="t" style="left:19.50px;top:22.70px;font-size:2.3px;line-height:2.3px;color:#fff;font-weight:bold">Тарифы</div><div class="t" style="left:31.90px;top:22.70px;font-size:2.3px;line-height:2.3px;color:#fff;font-weight:bold">Возможности</div><div class="t" style="left:50.50px;top:22.70px;font-size:2.3px;line-height:2.3px;color:#fff;font-weight:bold">Контакты</div><div class="t" style="left:64.90px;top:22.70px;font-size:2.3px;line-height:2.3px;color:#fff;font-weight:bold">Поддержка</div><div class="b" style="left:2.00px;top:27.30px;width:84.00px;height:27.20px;background:#c2e2f8;"></div><div class="t" style="left:3.90px;top:29.10px;font-size:2.4px;line-height:2.4px;color:#1d3a66;font-weight:bold"><span style="color:#2a6fca">MySVN</span> - Профессиональный хостинг Subversion &amp; Trac</div><div class="b" style="left:7.90px;top:34.70px;width:1.40px;height:1.40px;background:#5a9ad0;"></div><div class="t" style="left:10.90px;top:34.50px;font-size:2px;line-height:2px;color:#5a7796;">Неограниченное количество проектов</div><div class="b" style="left:7.90px;top:38.10px;width:1.40px;height:1.40px;background:#5a9ad0;"></div><div class="t" style="left:10.90px;top:37.90px;font-size:2px;line-height:2px;color:#5a7796;">Неограниченное количество разработчиков</div><div class="b" style="left:7.90px;top:41.50px;width:1.40px;height:1.40px;background:#5a9ad0;"></div><div class="t" style="left:10.90px;top:41.30px;font-size:2px;line-height:2px;color:#5a7796;">Быстрая и надежная работа</div><div class="b" style="left:46.90px;top:34.70px;width:1.40px;height:1.40px;background:#5a9ad0;"></div><div class="t" style="left:49.90px;top:34.50px;font-size:2px;line-height:2px;color:#5a7796;">Безопасность</div><div class="b" style="left:46.90px;top:38.10px;width:1.40px;height:1.40px;background:#5a9ad0;"></div><div class="t" style="left:49.90px;top:37.90px;font-size:2px;line-height:2px;color:#5a7796;">Надежность</div><div class="b" style="left:46.90px;top:41.50px;width:1.40px;height:1.40px;background:#5a9ad0;"></div><div class="t" style="left:49.90px;top:41.30px;font-size:2px;line-height:2px;color:#5a7796;">Открытые проекты</div><div class="b" style="left:67.70px;top:33.70px;width:16.00px;height:16.00px;background:radial-gradient(circle at 40% 40%,#f7c67a,#e8912a 60%,#d97c1a);border-radius:50%;border:.6px solid #f3d9a8"></div><div class="b" style="left:31.65px;top:47.30px;width:18.40px;height:6.00px;background:linear-gradient(#3aa0ee,#156fd2);border-radius:1.6px;border:.5px solid #0f5fb8"></div><div class="t" style="left:31.65px;top:48.30px;font-size:1.9px;line-height:1.9px;color:#fff;font-weight:bold"><div style="width:18.4px;text-align:center">Попробовать<br>сейчас</div></div><div class="b" style="left:87.30px;top:27.30px;width:56.90px;height:27.20px;background:#1e88b6;"></div><div class="t" style="left:89.30px;top:30.30px;font-size:2.1px;line-height:2.1px;color:#fff;font-weight:bold">Новость</div><div class="t" style="left:89.30px;top:32.60px;font-size:1.9px;line-height:1.9px;color:#bfe0ef;">Тарифные планы обновлены, бесплатный тариф</div><div class="t" style="left:89.30px;top:37.20px;font-size:2.1px;line-height:2.1px;color:#fff;font-weight:bold">Обновление</div><div class="t" style="left:89.30px;top:39.50px;font-size:1.9px;line-height:1.9px;color:#bfe0ef;">Subversion обновлён</div><div class="t" style="left:89.30px;top:44.10px;font-size:2.1px;line-height:2.1px;color:#fff;font-weight:bold">Новая версия Trac</div><div class="t" style="left:89.30px;top:46.40px;font-size:1.9px;line-height:1.9px;color:#bfe0ef;">Установлена стабильная версия</div><div class="b" style="left:0.20px;top:44.50px;width:3.30px;height:21.20px;background:#76bbd4;border-radius:0 1px 1px 0"></div><div class="t" style="left:2.10px;top:56.30px;font-size:2.3px;line-height:2.3px;color:#444;font-weight:bold"><div style="width:142px;text-align:center">Добро пожаловать в MySVN !</div></div><div class="t" style="left:4.90px;top:59.30px;font-size:2px;line-height:2px;color:#3a6a9a;">MySVN - это виртуальный хостинг исходных кодов, который основан на Subversion и Trac.</div><div class="t" style="left:4.90px;top:61.90px;font-size:2px;line-height:2px;color:#777;">Subversion - это система управления версиями, которая предоставляет единое место для хранения исходных кодов.</div><div class="t" style="left:4.90px;top:66.30px;font-size:1.95px;line-height:1.95px;color:#8a8a8a;">Мы предлагаем бесплатный тарифный план для небольших проектов и недорогие платные планы для более крупных проектов. Любой ваш проект может</div><div class="t" style="left:4.90px;top:68.75px;font-size:1.95px;line-height:1.95px;color:#8a8a8a;">Мы предлагаем бесплатный тарифный план для небольших проектов и недорогие платные планы для более крупных проектов. Любой ваш проект может</div><div class="t" style="left:4.90px;top:71.20px;font-size:1.95px;line-height:1.95px;color:#8a8a8a;">Мы предлагаем бесплатный тарифный план для небольших проектов и недорогие платные планы для более крупных проектов. Любой ваш проект может</div><div class="t" style="left:4.90px;top:73.65px;font-size:1.95px;line-height:1.95px;color:#8a8a8a;">Мы предлагаем бесплатный тарифный план для небольших проектов и недорогие платные планы для более крупных проектов. Любой ваш проект может</div><div class="t" style="left:2.10px;top:77.70px;font-size:2.2px;line-height:2.2px;color:#444;font-weight:bold"><div style="width:142px;text-align:center">Прямо сейчас вы можете:</div></div><div class="t" style="left:4.90px;top:80.70px;font-size:2.1px;line-height:2.1px;color:#1f4f9a;font-weight:bold;text-decoration:none">• Получить неограниченный по количеству проектов хостинг Subversion на месяц.</div><div class="t" style="left:4.90px;top:83.20px;font-size:2.1px;line-height:2.1px;color:#1f4f9a;font-weight:bold;text-decoration:none">• Пригласить работу с хостингом или узнать как начать.</div><div class="t" style="left:4.90px;top:85.70px;font-size:2.1px;line-height:2.1px;color:#1f4f9a;font-weight:bold;text-decoration:none">• Создать свой собственный бесплатный аккаунт и затем при желании перейти на платный тарифный план.</div><div class="t" style="left:39.90px;top:90.50px;font-size:2.1px;line-height:2.1px;color:#555;font-weight:bold">Проекты</div><div class="t" style="left:101.90px;top:90.50px;font-size:2.1px;line-height:2.1px;color:#555;font-weight:bold">Последние комментарии</div><div class="b" style="left:3.50px;top:93.30px;width:84.00px;height:17.00px;background:#f3f3f3;"></div><div class="b" style="left:89.90px;top:93.30px;width:54.00px;height:17.00px;background:#f3f3f3;"></div><div class="t" style="left:4.90px;top:93.70px;font-size:2px;line-height:2px;color:#333;">■ Открытые проекты MySVN</div><div class="t" style="left:7.50px;top:96.10px;font-size:2px;line-height:2px;color:#2f9a2f;text-decoration:none">Система учета электронного документооборота</div><div class="t" style="left:7.50px;top:98.45px;font-size:2px;line-height:2px;color:#2f9a2f;text-decoration:none">Веб-сервис для организации работы</div><div class="t" style="left:7.50px;top:100.80px;font-size:2px;line-height:2px;color:#2f9a2f;text-decoration:none">Сервис планирования совместных мероприятий</div><div class="t" style="left:7.50px;top:103.15px;font-size:2px;line-height:2px;color:#2f9a2f;text-decoration:none">Программное обеспечение для управления предприятием</div><div class="t" style="left:7.50px;top:105.50px;font-size:2px;line-height:2px;color:#2f9a2f;text-decoration:none">Игровой проект</div><div class="t" style="left:7.50px;top:107.85px;font-size:2px;line-height:2px;color:#2f9a2f;text-decoration:none">Библиотека алгоритмов</div><div class="t" style="left:91.30px;top:93.70px;font-size:1.95px;line-height:1.95px;color:#222;">■ Авторизация при интеграции с проектом</div><div class="t" style="left:91.30px;top:96.05px;font-size:1.95px;line-height:1.95px;color:#555;">   Спасибо! Ответил в комментариях</div><div class="t" style="left:91.30px;top:98.40px;font-size:1.95px;line-height:1.95px;color:#222;">■ Как установить свой тип репозитория</div><div class="t" style="left:91.30px;top:100.75px;font-size:1.95px;line-height:1.95px;color:#555;">   Добрый день. Пожалуйста, напишите в поддержку</div><div class="t" style="left:91.30px;top:103.10px;font-size:1.95px;line-height:1.95px;color:#222;">   Можно ли перенести существующий</div><div class="t" style="left:91.30px;top:105.45px;font-size:1.95px;line-height:1.95px;color:#555;">   репозиторий на ваш хостинг</div></div><div class="cap"><div class="cw" style="text-align:left;"><svg class="ic" width="9.5" height="9" viewBox="0 0 9.5 9"><rect x="0" y="0.4" width="9.5" height="8.2" fill="#dfe6f3"/><path d="M0.6 2.2 C3 0.6 6 1 9 2.6" stroke="#4a78c4" stroke-width="1.2" fill="none"/><path d="M0.6 4.8 C3 3.4 6 3.8 9 5.2" stroke="#6a93d6" stroke-width="1.2" fill="none"/><path d="M0.6 7.2 C3 6 6 6.4 9 7.8" stroke="#4a78c4" stroke-width="1.2" fill="none"/></svg>MySvn - профессиональный хостинг Subversion</div></div></div>
<div class="tile abs" style="left:168.60px;top:488.30px"><div class="th" style="background:#262626"><div class="b" style="left:4.40px;top:-0.50px;width:138.00px;height:13.20px;background:linear-gradient(#2244a8,#2f5cc4 60%,#3f78d6);"></div><svg class="b" style="left:4.40px;top:-0.50px" width="18" height="16" viewBox="0 0 18 16"><path d="M0 0 H12 C14 6 10 12 0 16 Z" fill="#3a7fd8" opacity=".8"/><path d="M6.4 14 V8" stroke="#5d7a2a" stroke-width=".8"/><path d="M6.2 9 C3.8 8.6 2.2 6.6 2.4 4.2 C5 4.6 6.6 6.6 6.2 9 Z" fill="#d6e24a"/><path d="M6.8 7 C6.6 4.6 8 2.4 10.4 1.8 C10.8 4.4 9.2 6.6 6.8 7 Z" fill="#c7dc3c"/><path d="M7 11.4 C8 9.4 10 8.6 12.2 9 C11.4 11.2 9.2 12.2 7 11.4 Z" fill="#a9cf3a"/><path d="M5 3.4 C4.4 2.2 4.8 1 5.8 0.4 C6.6 1.6 6.2 2.8 5 3.4 Z" fill="#e3e85a"/></svg><div class="t" style="left:23.70px;top:3.50px;font-size:3.8px;line-height:3.8px;color:#fff;font-weight:bold;letter-spacing:-.05px">Gazenwagen RG</div><div class="t" style="left:136.00px;top:0.70px;font-size:1.8px;line-height:1.8px;color:#cfdcf5;">Logout</div><div class="b" style="left:128.80px;top:6.10px;width:11.80px;height:3.70px;background:#3a5cc0;border:.5px solid #7f9fe6;border-radius:.6px"></div><div class="t" style="left:128.80px;top:7.00px;font-size:1.9px;line-height:1.9px;color:#fff;font-weight:bold"><div style="width:11.8px;text-align:center">Dashboard</div></div><div class="b" style="left:4.40px;top:12.70px;width:138.00px;height:5.20px;background:linear-gradient(#9bc934,#a9d13f 45%,#d4e89a 62%,#9cc934 80%,#b7d85c);"></div><div class="b" style="left:4.40px;top:17.90px;width:138.00px;height:56.80px;background:#fefefe;"></div><div class="t" style="left:6.30px;top:19.70px;font-size:2.9px;line-height:2.9px;color:#222;font-weight:bold">Projects</div><div class="b" style="left:6.40px;top:22.90px;width:65.00px;height:0.70px;background:#8fc031;"></div><div class="t" style="left:54.40px;top:24.30px;font-size:1.7px;line-height:1.7px;color:#666;">Filter:</div><div class="b" style="left:59.40px;top:24.10px;width:11.60px;height:2.00px;background:#fff;border:.4px solid #c8c8c8"></div><div class="t" style="left:6.80px;top:27.30px;font-size:2.2px;line-height:2.2px;color:#333;font-weight:bold">gazenwagen</div><div class="b" style="left:6.40px;top:29.90px;width:65.00px;height:0.40px;background:#ddd;"></div><div class="b" style="left:69.00px;top:27.50px;width:1.20px;height:1.20px;background:#777;border-radius:50%"></div><div class="t" style="left:9.00px;top:30.90px;font-size:2.2px;line-height:2.2px;color:#2a4fd0;font-weight:bold">selfcms (git)</div><div class="b" style="left:69.00px;top:31.10px;width:1.20px;height:1.20px;background:#3a5fd0;border-radius:50%"></div><div class="t" style="left:9.00px;top:33.50px;font-size:1.9px;line-height:1.9px;color:#333;">Updated: 2014-05-08   Last commit: 6 days, 3 hours ago</div><div class="t" style="left:9.00px;top:35.80px;font-size:1.9px;line-height:1.9px;color:#333;">Tags: php, framework, cms, mobile, development</div><div class="t" style="left:9.00px;top:38.10px;font-size:1.9px;line-height:1.9px;color:#333;">Repository size: 2.4Mb   Commits this week: 3</div><div class="b" style="left:4.40px;top:74.60px;width:138.00px;height:5.10px;background:#6ca62c;"></div><div class="t" style="left:6.00px;top:76.10px;font-size:1.9px;line-height:1.9px;color:#dcebc4;">© 2007-2014 Repository Hosting. All rights reserved.</div><div class="t" style="left:112.40px;top:76.10px;font-size:1.9px;line-height:1.9px;color:#dcebc4;white-space:pre">Terms of Service   Privacy   Support</div></div><div class="cap"><div class="cw" style="letter-spacing:-0.24px;"><svg class="ic" width="9.5" height="9" viewBox="0 0 9.5 9"><path d="M4.6 8.8 V4.6" stroke="#6f9b2c" stroke-width="1"/><path d="M4.6 5 C2.6 5 1 3.8 0.6 1.6 C3 1.4 4.6 2.8 4.6 5 Z" fill="#9ccb3b"/><path d="M4.9 4.4 C5 2.4 6.4 0.8 8.8 0.6 C9 3 7.4 4.6 4.9 4.4 Z" fill="#b7d95a"/><path d="M4.8 7.4 C6 6 7.4 5.8 8.8 6.4 C7.8 7.8 6.2 8.2 4.8 7.4 Z" fill="#8fc031"/></svg>Repository Hosting</div></div></div>
</div>
<!-- /TILES -->
</body>
</html>
